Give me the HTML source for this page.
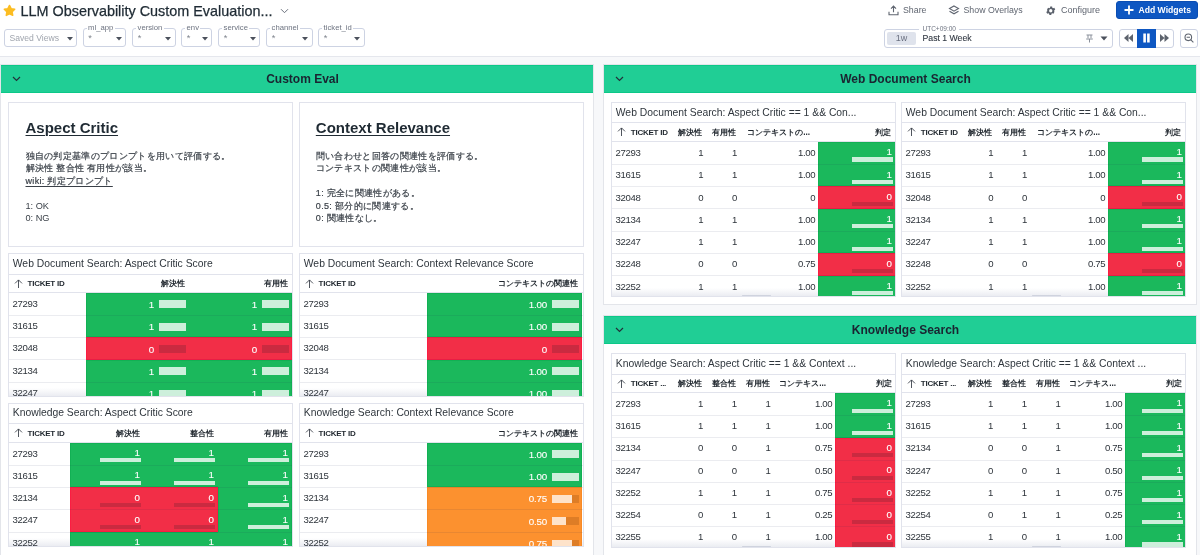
<!DOCTYPE html>
<html><head><meta charset="utf-8"><style>
html,body{margin:0;padding:0;}
body{will-change:transform;width:1200px;height:555px;overflow:hidden;position:relative;background:#f7f8fa;font-family:"Liberation Sans",sans-serif;}
div{box-sizing:content-box;}
</style></head><body>
<div style="position:absolute;left:0px;top:0px;width:1200px;height:56px;background:#fff;"></div>
<div style="position:absolute;left:0px;top:56px;width:1200px;height:1.4px;background:#e5e7ed;"></div>
<svg style="position:absolute;left:2.6px;top:4.1px" width="13" height="13" viewBox="0 0 24 24"><path d="M12.00 2.60 L15.06 8.59 L21.70 9.65 L16.95 14.41 L18.00 21.05 L12.00 18.00 L6.00 21.05 L7.05 14.41 L2.30 9.65 L8.94 8.59Z" fill="#fcbd22" stroke="#fcbd22" stroke-width="2.6" stroke-linejoin="round"/></svg>
<div style="position:absolute;left:20.5px;top:0px;height:22px;line-height:22px;font-size:14.4px;color:#1f2b34;font-weight:400;white-space:nowrap;-webkit-text-stroke:0.25px #1f2b34;">LLM Observability Custom Evaluation...</div>
<svg style="position:absolute;left:280px;top:8px" width="9" height="6" viewBox="0 0 9 6"><path d="M1 1.2l3.5 3.5 3.5-3.5" stroke="#6a707c" stroke-width="1" fill="none"/></svg>
<div style="position:absolute;left:3.5px;top:29.2px;width:73.5px;height:18.2px;box-sizing:border-box;border:1.2px solid #cdd3e3;border-radius:3px;background:#fff;"></div>
<div style="position:absolute;left:9.5px;top:32.3px;height:13px;line-height:13px;font-size:8.6px;color:#a0a5ae;font-weight:400;white-space:nowrap;">Saved Views</div>
<svg style="position:absolute;left:66.5px;top:36.6px" width="6" height="4" viewBox="0 0 6 4"><path d="M0 0h6L3 3.5z" fill="#4b515c"/></svg>
<div style="position:absolute;left:82.5px;top:28.3px;width:43.5px;height:18.4px;box-sizing:border-box;border:1.2px solid #cdd3e3;border-radius:3px;background:#fff;"></div>
<div style="position:absolute;left:86.7px;top:26px;width:28px;height:4px;background:#fff;"></div>
<div style="position:absolute;left:88.1px;top:23px;height:9px;line-height:9px;font-size:7.7px;color:#6d7380;font-weight:400;white-space:nowrap;">ml_app</div>
<div style="position:absolute;left:88.3px;top:31.8px;height:12px;line-height:12px;font-size:9.4px;color:#80868f;font-weight:400;white-space:nowrap;">*</div>
<svg style="position:absolute;left:115.5px;top:36.6px" width="6" height="4" viewBox="0 0 6 4"><path d="M0 0h6L3 3.5z" fill="#4b515c"/></svg>
<div style="position:absolute;left:132px;top:28.3px;width:43.5px;height:18.4px;box-sizing:border-box;border:1.2px solid #cdd3e3;border-radius:3px;background:#fff;"></div>
<div style="position:absolute;left:136.2px;top:26px;width:28px;height:4px;background:#fff;"></div>
<div style="position:absolute;left:137.6px;top:23px;height:9px;line-height:9px;font-size:7.7px;color:#6d7380;font-weight:400;white-space:nowrap;">version</div>
<div style="position:absolute;left:137.8px;top:31.8px;height:12px;line-height:12px;font-size:9.4px;color:#80868f;font-weight:400;white-space:nowrap;">*</div>
<svg style="position:absolute;left:165.0px;top:36.6px" width="6" height="4" viewBox="0 0 6 4"><path d="M0 0h6L3 3.5z" fill="#4b515c"/></svg>
<div style="position:absolute;left:181px;top:28.3px;width:31px;height:18.4px;box-sizing:border-box;border:1.2px solid #cdd3e3;border-radius:3px;background:#fff;"></div>
<div style="position:absolute;left:185.2px;top:26px;width:15px;height:4px;background:#fff;"></div>
<div style="position:absolute;left:186.6px;top:23px;height:9px;line-height:9px;font-size:7.7px;color:#6d7380;font-weight:400;white-space:nowrap;">env</div>
<div style="position:absolute;left:186.8px;top:31.8px;height:12px;line-height:12px;font-size:9.4px;color:#80868f;font-weight:400;white-space:nowrap;">*</div>
<svg style="position:absolute;left:201.5px;top:36.6px" width="6" height="4" viewBox="0 0 6 4"><path d="M0 0h6L3 3.5z" fill="#4b515c"/></svg>
<div style="position:absolute;left:218px;top:28.3px;width:42px;height:18.4px;box-sizing:border-box;border:1.2px solid #cdd3e3;border-radius:3px;background:#fff;"></div>
<div style="position:absolute;left:222.2px;top:26px;width:26.6px;height:4px;background:#fff;"></div>
<div style="position:absolute;left:223.6px;top:23px;height:9px;line-height:9px;font-size:7.7px;color:#6d7380;font-weight:400;white-space:nowrap;">service</div>
<div style="position:absolute;left:223.8px;top:31.8px;height:12px;line-height:12px;font-size:9.4px;color:#80868f;font-weight:400;white-space:nowrap;">*</div>
<svg style="position:absolute;left:249.5px;top:36.6px" width="6" height="4" viewBox="0 0 6 4"><path d="M0 0h6L3 3.5z" fill="#4b515c"/></svg>
<div style="position:absolute;left:266px;top:28.3px;width:46.5px;height:18.4px;box-sizing:border-box;border:1.2px solid #cdd3e3;border-radius:3px;background:#fff;"></div>
<div style="position:absolute;left:270.2px;top:26px;width:30px;height:4px;background:#fff;"></div>
<div style="position:absolute;left:271.6px;top:23px;height:9px;line-height:9px;font-size:7.7px;color:#6d7380;font-weight:400;white-space:nowrap;">channel</div>
<div style="position:absolute;left:271.8px;top:31.8px;height:12px;line-height:12px;font-size:9.4px;color:#80868f;font-weight:400;white-space:nowrap;">*</div>
<svg style="position:absolute;left:302.0px;top:36.6px" width="6" height="4" viewBox="0 0 6 4"><path d="M0 0h6L3 3.5z" fill="#4b515c"/></svg>
<div style="position:absolute;left:318px;top:28.3px;width:46.5px;height:18.4px;box-sizing:border-box;border:1.2px solid #cdd3e3;border-radius:3px;background:#fff;"></div>
<div style="position:absolute;left:322.2px;top:26px;width:31.3px;height:4px;background:#fff;"></div>
<div style="position:absolute;left:323.6px;top:23px;height:9px;line-height:9px;font-size:7.7px;color:#6d7380;font-weight:400;white-space:nowrap;">ticket_id</div>
<div style="position:absolute;left:323.8px;top:31.8px;height:12px;line-height:12px;font-size:9.4px;color:#80868f;font-weight:400;white-space:nowrap;">*</div>
<svg style="position:absolute;left:354.0px;top:36.6px" width="6" height="4" viewBox="0 0 6 4"><path d="M0 0h6L3 3.5z" fill="#4b515c"/></svg>
<svg style="position:absolute;left:888px;top:5px" width="11" height="11" viewBox="0 0 11 11" fill="none" stroke="#5f6570" stroke-width="1.1"><path d="M5.5 1.2v6M3 3.6l2.5-2.5 2.5 2.5M1 6.8v3h9v-3"/></svg>
<div style="position:absolute;left:903px;top:2px;height:16px;line-height:16px;font-size:8.8px;color:#5f6570;font-weight:400;white-space:nowrap;">Share</div>
<svg style="position:absolute;left:948px;top:5px" width="12" height="11" viewBox="0 0 12 11" fill="none" stroke="#5f6570" stroke-width="1.1"><path d="M6 1L10.5 3.6 6 6.2 1.5 3.6z M1.5 6.2L6 8.8 10.5 6.2"/></svg>
<div style="position:absolute;left:963.5px;top:2px;height:16px;line-height:16px;font-size:8.8px;color:#5f6570;font-weight:400;white-space:nowrap;">Show Overlays</div>
<svg style="position:absolute;left:1046px;top:6px" width="9.5" height="9.5" viewBox="2 2 20 20"><path fill="#5a606b" d="M19.4 13a7.7 7.7 0 0 0 0-2l2.1-1.6-2-3.5-2.5 1a7.6 7.6 0 0 0-1.7-1l-.4-2.6h-4l-.4 2.6a7.6 7.6 0 0 0-1.7 1l-2.5-1-2 3.5L4.6 11a7.7 7.7 0 0 0 0 2l-2.1 1.6 2 3.5 2.5-1a7.6 7.6 0 0 0 1.7 1l.4 2.6h4l.4-2.6a7.6 7.6 0 0 0 1.7-1l2.5 1 2-3.5zM12 15.5a3.5 3.5 0 1 1 0-7 3.5 3.5 0 0 1 0 7z"/></svg>
<div style="position:absolute;left:1061px;top:2px;height:16px;line-height:16px;font-size:9px;color:#5f6570;font-weight:400;white-space:nowrap;">Configure</div>
<div style="position:absolute;left:1116px;top:1px;width:82px;height:18px;box-sizing:border-box;background:#0e57c2;border:1px solid #0a4db3;border-radius:3px;"></div>
<svg style="position:absolute;left:1124px;top:5px" width="10" height="10" viewBox="0 0 10 10" stroke="#fff" stroke-width="1.8"><path d="M5 0.5v9M0.5 5h9"/></svg>
<div style="position:absolute;left:1138.5px;top:1px;height:18px;line-height:18px;font-size:8.6px;color:#fff;font-weight:700;white-space:nowrap;">Add Widgets</div>
<div style="position:absolute;left:884px;top:28.5px;width:229px;height:19px;box-sizing:border-box;border:1.2px solid #cdd3e3;border-radius:3px;background:#fff;"></div>
<div style="position:absolute;left:919px;top:26px;width:40px;height:4px;background:#fff;"></div>
<div style="position:absolute;left:922.5px;top:25px;height:8px;line-height:8px;font-size:6.5px;color:#6d7380;font-weight:400;white-space:nowrap;">UTC+09:00</div>
<div style="position:absolute;left:887px;top:32px;width:29px;height:12.5px;background:#dfe3ec;border-radius:2px;"></div>
<div style="position:absolute;left:887px;width:29px;text-align:center;top:32px;height:12.5px;line-height:12.5px;font-size:9px;color:#6a7080;font-weight:400;white-space:nowrap;">1w</div>
<div style="position:absolute;left:922.5px;top:31px;height:14px;line-height:14px;font-size:8.7px;color:#2f3640;font-weight:400;white-space:nowrap;-webkit-text-stroke:0.1px #2f3640;">Past 1 Week</div>
<svg style="position:absolute;left:1085px;top:34px" width="9" height="9" viewBox="0 0 9 9" fill="none" stroke="#8a909b" stroke-width="1"><path d="M1.5 1h6M3 1v3.2M6 1v3.2M1.2 5h6.6M4.5 5v3.5"/></svg>
<svg style="position:absolute;left:1100px;top:36px" width="8" height="5" viewBox="0 0 8 5"><path d="M0.5 0.5h7L4 4.5z" fill="#4b515c"/></svg>
<div style="position:absolute;left:1119px;top:28.5px;width:54.5px;height:19px;box-sizing:border-box;border:1.2px solid #cdd3e3;border-radius:3px;background:#fff;"></div>
<div style="position:absolute;left:1137px;top:28.5px;width:18.8px;height:19px;background:#0e57c2;"></div>
<svg style="position:absolute;left:1124px;top:34px" width="9" height="8" viewBox="0 0 9 8" fill="#5d636d"><path d="M4.5 0v8L0 4zM9 0v8L4.5 4z"/></svg>
<svg style="position:absolute;left:1142px;top:33px" width="9" height="10" viewBox="0 0 9 10" fill="#fff"><rect x="1.3" y="0.5" width="2.6" height="9"/><rect x="5.1" y="0.5" width="2.6" height="9"/></svg>
<svg style="position:absolute;left:1160px;top:34px" width="9" height="8" viewBox="0 0 9 8" fill="#5d636d"><path d="M0 0v8L4.5 4zM4.5 0v8L9 4z"/></svg>
<div style="position:absolute;left:1180px;top:28.5px;width:17.5px;height:19px;box-sizing:border-box;border:1.2px solid #cdd3e3;border-radius:3px;background:#fff;"></div>
<svg style="position:absolute;left:1184px;top:33px" width="10" height="10" viewBox="0 0 10 10" fill="none" stroke="#5f6570" stroke-width="1.1"><circle cx="4.3" cy="4.3" r="3.3"/><path d="M2.6 4.3h3.4M6.8 6.8l2.6 2.6"/></svg>
<div style="position:absolute;left:0px;top:57px;width:1200px;height:498px;background:#f7f8fa;"></div>
<div style="position:absolute;left:0px;top:64px;width:594px;height:500px;box-sizing:border-box;background:#fff;border:1px solid #e3e5ea;"></div>
<div style="position:absolute;left:1px;top:65px;width:592px;height:28px;background:#20ce95;box-shadow:inset 0 -1px 0 #0cc888, inset 0 1px 0 #0cc888;"></div>
<svg style="position:absolute;left:12px;top:76px" width="9" height="6" viewBox="0 0 9 6"><path d="M1 1l3.5 3.5L8 1" stroke="#23313a" stroke-width="1.2" fill="none"/></svg>
<div style="position:absolute;left:2.5px;width:600px;text-align:center;top:65px;height:28px;line-height:28px;font-size:12px;color:#1a2431;font-weight:700;white-space:nowrap;">Custom Eval</div>
<div style="position:absolute;left:603px;top:64px;width:594px;height:241px;box-sizing:border-box;background:#fff;border:1px solid #e3e5ea;"></div>
<div style="position:absolute;left:604px;top:65px;width:592px;height:28px;background:#20ce95;box-shadow:inset 0 -1px 0 #0cc888, inset 0 1px 0 #0cc888;"></div>
<svg style="position:absolute;left:615px;top:76px" width="9" height="6" viewBox="0 0 9 6"><path d="M1 1l3.5 3.5L8 1" stroke="#23313a" stroke-width="1.2" fill="none"/></svg>
<div style="position:absolute;left:605.5px;width:600px;text-align:center;top:65px;height:28px;line-height:28px;font-size:12px;color:#1a2431;font-weight:700;white-space:nowrap;">Web Document Search</div>
<div style="position:absolute;left:603px;top:315px;width:594px;height:260px;box-sizing:border-box;background:#fff;border:1px solid #e3e5ea;"></div>
<div style="position:absolute;left:604px;top:316px;width:592px;height:28px;background:#20ce95;box-shadow:inset 0 -1px 0 #0cc888, inset 0 1px 0 #0cc888;"></div>
<svg style="position:absolute;left:615px;top:327px" width="9" height="6" viewBox="0 0 9 6"><path d="M1 1l3.5 3.5L8 1" stroke="#23313a" stroke-width="1.2" fill="none"/></svg>
<div style="position:absolute;left:605.5px;width:600px;text-align:center;top:316px;height:28px;line-height:28px;font-size:12px;color:#1a2431;font-weight:700;white-space:nowrap;">Knowledge Search</div>
<div style="position:absolute;left:8px;top:102px;width:285px;height:145px;box-sizing:border-box;background:#fff;border:1px solid #e1e3ec;"></div>
<div style="position:absolute;left:25.5px;top:118.2px;height:20px;line-height:20px;font-size:15px;color:#1f2a33;font-weight:700;white-space:nowrap;text-decoration:underline;text-decoration-thickness:1px;text-underline-offset:2px;">Aspect Critic</div>
<div style="position:absolute;left:25.5px;top:149.55px;height:12.5px;line-height:12.5px;font-size:9px;color:#3a4048;font-weight:400;white-space:nowrap;letter-spacing:0.33px;-webkit-text-stroke:0.2px #3a4048;">独自の判定基準のプロンプトを用いて評価する。</div>
<div style="position:absolute;left:25.5px;top:162.10000000000002px;height:12.5px;line-height:12.5px;font-size:9px;color:#3a4048;font-weight:400;white-space:nowrap;letter-spacing:0.33px;-webkit-text-stroke:0.2px #3a4048;">解決性 整合性 有用性が該当。</div>
<div style="position:absolute;left:25.5px;top:174.65px;height:12.5px;line-height:12.5px;font-size:9px;color:#3a4048;font-weight:400;white-space:nowrap;text-decoration:underline;text-decoration-thickness:1px;text-underline-offset:1.5px;letter-spacing:0.33px;-webkit-text-stroke:0.2px #3a4048;">wiki: 判定プロンプト</div>
<div style="position:absolute;left:25.5px;top:199.75px;height:12.5px;line-height:12.5px;font-size:9.2px;color:#3a4048;font-weight:400;white-space:nowrap;">1: OK</div>
<div style="position:absolute;left:25.5px;top:212.3px;height:12.5px;line-height:12.5px;font-size:9.2px;color:#3a4048;font-weight:400;white-space:nowrap;">0: NG</div>
<div style="position:absolute;left:299px;top:102px;width:285px;height:145px;box-sizing:border-box;background:#fff;border:1px solid #e1e3ec;"></div>
<div style="position:absolute;left:315.8px;top:118.2px;height:20px;line-height:20px;font-size:15px;color:#1f2a33;font-weight:700;white-space:nowrap;text-decoration:underline;text-decoration-thickness:1px;text-underline-offset:2px;">Context Relevance</div>
<div style="position:absolute;left:315.8px;top:149.55px;height:12.5px;line-height:12.5px;font-size:9px;color:#3a4048;font-weight:400;white-space:nowrap;letter-spacing:0.33px;-webkit-text-stroke:0.2px #3a4048;">問い合わせと回答の関連性を評価する。</div>
<div style="position:absolute;left:315.8px;top:162.10000000000002px;height:12.5px;line-height:12.5px;font-size:9px;color:#3a4048;font-weight:400;white-space:nowrap;letter-spacing:0.33px;-webkit-text-stroke:0.2px #3a4048;">コンテキストの関連性が該当。</div>
<div style="position:absolute;left:315.8px;top:187.20000000000002px;height:12.5px;line-height:12.5px;font-size:9px;color:#3a4048;font-weight:400;white-space:nowrap;letter-spacing:0.33px;-webkit-text-stroke:0.2px #3a4048;">1: 完全に関連性がある。</div>
<div style="position:absolute;left:315.8px;top:199.75px;height:12.5px;line-height:12.5px;font-size:9px;color:#3a4048;font-weight:400;white-space:nowrap;letter-spacing:0.33px;-webkit-text-stroke:0.2px #3a4048;">0.5: 部分的に関連する。</div>
<div style="position:absolute;left:315.8px;top:212.3px;height:12.5px;line-height:12.5px;font-size:9px;color:#3a4048;font-weight:400;white-space:nowrap;letter-spacing:0.33px;-webkit-text-stroke:0.2px #3a4048;">0: 関連性なし。</div>
<div style="position:absolute;left:8px;top:253px;width:285px;height:144px;background:#fff;overflow:hidden;"><div style="position:absolute;left:4.8px;top:-0.5px;height:21.399999999999977px;line-height:21.399999999999977px;font-size:10.35px;color:#2f363d;font-weight:400;white-space:nowrap;">Web Document Search: Aspect Critic Score</div><div style="position:absolute;left:0px;top:21px;width:285px;height:1px;background:#e1e3ec;"></div><div style="position:absolute;left:0px;top:39px;width:285px;height:1px;background:#e1e3ec;"></div><div style="position:absolute;left:0px;top:135px;width:285px;height:9px;background:linear-gradient(rgba(255,255,255,0),rgba(232,234,240,1));"></div><svg style="position:absolute;left:6px;top:25.49999999999998px" width="9" height="9" viewBox="0 0 9 9" fill="none" stroke="#3d434c" stroke-width="0.9"><path d="M4.5 1v8M1 4.4L4.5 0.9 8 4.4"/></svg><div style="position:absolute;left:19.6px;top:22.399999999999977px;height:18.0px;line-height:18.0px;font-size:8px;color:#1f262d;font-weight:700;white-space:nowrap;letter-spacing:-0.25px;">TICKET ID</div><div style="position:absolute;left:-223.2px;width:400px;text-align:right;top:22.399999999999977px;height:18.0px;line-height:18.0px;font-size:8.2px;color:#1f262d;font-weight:700;white-space:nowrap;">解決性</div><div style="position:absolute;left:-120px;width:400px;text-align:right;top:22.399999999999977px;height:18.0px;line-height:18.0px;font-size:8.2px;color:#1f262d;font-weight:700;white-space:nowrap;">有用性</div><div style="position:absolute;left:4.6px;top:39.59999999999997px;height:22.3px;line-height:22.3px;font-size:9.6px;color:#2d333a;font-weight:400;white-space:nowrap;letter-spacing:-0.33px;">27293</div><div style="position:absolute;left:78px;top:40px;width:103px;height:22px;box-sizing:border-box;background:#1bb85c;border-left:1px solid #12b054;border-top:1px solid #12b054;"></div><div style="position:absolute;left:-254px;width:400px;text-align:right;top:40.89999999999998px;height:22.3px;line-height:22.3px;font-size:9.8px;color:#fff;font-weight:400;white-space:nowrap;letter-spacing:-0.22px;-webkit-text-stroke:0.1px #fff;">1</div><div style="position:absolute;left:151.0px;top:47.39999999999998px;width:27.0px;height:8px;background:rgba(255,255,255,0.78);"></div><div style="position:absolute;left:181px;top:40px;width:103px;height:22px;box-sizing:border-box;background:#1bb85c;border-right:1px solid #12b054;border-top:1px solid #12b054;"></div><div style="position:absolute;left:-151px;width:400px;text-align:right;top:40.89999999999998px;height:22.3px;line-height:22.3px;font-size:9.8px;color:#fff;font-weight:400;white-space:nowrap;letter-spacing:-0.22px;-webkit-text-stroke:0.1px #fff;">1</div><div style="position:absolute;left:254.0px;top:47.39999999999998px;width:27.0px;height:8px;background:rgba(255,255,255,0.78);"></div><div style="position:absolute;left:4.6px;top:61.89999999999997px;height:22.3px;line-height:22.3px;font-size:9.6px;color:#2d333a;font-weight:400;white-space:nowrap;letter-spacing:-0.33px;">31615</div><div style="position:absolute;left:78px;top:62px;width:103px;height:22px;box-sizing:border-box;background:#1bb85c;border-left:1px solid #12b054;border-bottom:1px solid #12b054;"></div><div style="position:absolute;left:-254px;width:400px;text-align:right;top:63.199999999999974px;height:22.3px;line-height:22.3px;font-size:9.8px;color:#fff;font-weight:400;white-space:nowrap;letter-spacing:-0.22px;-webkit-text-stroke:0.1px #fff;">1</div><div style="position:absolute;left:151.0px;top:69.69999999999997px;width:27.0px;height:8px;background:rgba(255,255,255,0.78);"></div><div style="position:absolute;left:181px;top:62px;width:103px;height:22px;box-sizing:border-box;background:#1bb85c;border-right:1px solid #12b054;border-bottom:1px solid #12b054;"></div><div style="position:absolute;left:-151px;width:400px;text-align:right;top:63.199999999999974px;height:22.3px;line-height:22.3px;font-size:9.8px;color:#fff;font-weight:400;white-space:nowrap;letter-spacing:-0.22px;-webkit-text-stroke:0.1px #fff;">1</div><div style="position:absolute;left:254.0px;top:69.69999999999997px;width:27.0px;height:8px;background:rgba(255,255,255,0.78);"></div><div style="position:absolute;left:4.6px;top:84.19999999999997px;height:22.3px;line-height:22.3px;font-size:9.6px;color:#2d333a;font-weight:400;white-space:nowrap;letter-spacing:-0.33px;">32048</div><div style="position:absolute;left:78px;top:84px;width:103px;height:23px;box-sizing:border-box;background:#f22e47;border-left:1px solid #fb1d42;border-top:1px solid #fb1d42;border-bottom:1px solid #fb1d42;"></div><div style="position:absolute;left:-254px;width:400px;text-align:right;top:85.49999999999997px;height:22.3px;line-height:22.3px;font-size:9.8px;color:#fff;font-weight:400;white-space:nowrap;letter-spacing:-0.22px;-webkit-text-stroke:0.1px #fff;">0</div><div style="position:absolute;left:151.0px;top:91.99999999999997px;width:27.0px;height:8px;background:rgba(60,30,40,0.22);"></div><div style="position:absolute;left:181px;top:84px;width:103px;height:23px;box-sizing:border-box;background:#f22e47;border-right:1px solid #fb1d42;border-top:1px solid #fb1d42;border-bottom:1px solid #fb1d42;"></div><div style="position:absolute;left:-151px;width:400px;text-align:right;top:85.49999999999997px;height:22.3px;line-height:22.3px;font-size:9.8px;color:#fff;font-weight:400;white-space:nowrap;letter-spacing:-0.22px;-webkit-text-stroke:0.1px #fff;">0</div><div style="position:absolute;left:254.0px;top:91.99999999999997px;width:27.0px;height:8px;background:rgba(60,30,40,0.22);"></div><div style="position:absolute;left:4.6px;top:106.49999999999999px;height:22.3px;line-height:22.3px;font-size:9.6px;color:#2d333a;font-weight:400;white-space:nowrap;letter-spacing:-0.33px;">32134</div><div style="position:absolute;left:78px;top:107px;width:103px;height:22px;box-sizing:border-box;background:#1bb85c;border-left:1px solid #12b054;border-top:1px solid #12b054;"></div><div style="position:absolute;left:-254px;width:400px;text-align:right;top:107.79999999999998px;height:22.3px;line-height:22.3px;font-size:9.8px;color:#fff;font-weight:400;white-space:nowrap;letter-spacing:-0.22px;-webkit-text-stroke:0.1px #fff;">1</div><div style="position:absolute;left:151.0px;top:114.29999999999998px;width:27.0px;height:8px;background:rgba(255,255,255,0.78);"></div><div style="position:absolute;left:181px;top:107px;width:103px;height:22px;box-sizing:border-box;background:#1bb85c;border-right:1px solid #12b054;border-top:1px solid #12b054;"></div><div style="position:absolute;left:-151px;width:400px;text-align:right;top:107.79999999999998px;height:22.3px;line-height:22.3px;font-size:9.8px;color:#fff;font-weight:400;white-space:nowrap;letter-spacing:-0.22px;-webkit-text-stroke:0.1px #fff;">1</div><div style="position:absolute;left:254.0px;top:114.29999999999998px;width:27.0px;height:8px;background:rgba(255,255,255,0.78);"></div><div style="position:absolute;left:4.6px;top:128.79999999999998px;height:22.3px;line-height:22.3px;font-size:9.6px;color:#2d333a;font-weight:400;white-space:nowrap;letter-spacing:-0.33px;">32247</div><div style="position:absolute;left:78px;top:129px;width:103px;height:22px;box-sizing:border-box;background:#1bb85c;border-left:1px solid #12b054;"></div><div style="position:absolute;left:-254px;width:400px;text-align:right;top:130.09999999999997px;height:22.3px;line-height:22.3px;font-size:9.8px;color:#fff;font-weight:400;white-space:nowrap;letter-spacing:-0.22px;-webkit-text-stroke:0.1px #fff;">1</div><div style="position:absolute;left:151.0px;top:136.59999999999997px;width:27.0px;height:8px;background:rgba(255,255,255,0.78);"></div><div style="position:absolute;left:181px;top:129px;width:103px;height:22px;box-sizing:border-box;background:#1bb85c;border-right:1px solid #12b054;"></div><div style="position:absolute;left:-151px;width:400px;text-align:right;top:130.09999999999997px;height:22.3px;line-height:22.3px;font-size:9.8px;color:#fff;font-weight:400;white-space:nowrap;letter-spacing:-0.22px;-webkit-text-stroke:0.1px #fff;">1</div><div style="position:absolute;left:254.0px;top:136.59999999999997px;width:27.0px;height:8px;background:rgba(255,255,255,0.78);"></div><div style="position:absolute;left:0px;top:61.699999999999974px;width:285px;height:1px;background:rgba(30,40,90,0.09);"></div><div style="position:absolute;left:0px;top:83.99999999999997px;width:285px;height:1px;background:rgba(30,40,90,0.09);"></div><div style="position:absolute;left:0px;top:106.29999999999997px;width:285px;height:1px;background:rgba(30,40,90,0.09);"></div><div style="position:absolute;left:0px;top:128.6px;width:285px;height:1px;background:rgba(30,40,90,0.09);"></div><div style="position:absolute;left:0px;top:150.89999999999998px;width:285px;height:1px;background:rgba(30,40,90,0.09);"></div><div style="position:absolute;left:0px;top:0px;width:285px;height:144px;box-sizing:border-box;border:1px solid #e1e3ec;"></div></div>
<div style="position:absolute;left:299px;top:253px;width:285px;height:144px;background:#fff;overflow:hidden;"><div style="position:absolute;left:4.8px;top:-0.5px;height:21.399999999999977px;line-height:21.399999999999977px;font-size:10.35px;color:#2f363d;font-weight:400;white-space:nowrap;">Web Document Search: Context Relevance Score</div><div style="position:absolute;left:0px;top:21px;width:285px;height:1px;background:#e1e3ec;"></div><div style="position:absolute;left:0px;top:39px;width:285px;height:1px;background:#e1e3ec;"></div><div style="position:absolute;left:0px;top:135px;width:285px;height:9px;background:linear-gradient(rgba(255,255,255,0),rgba(232,234,240,1));"></div><svg style="position:absolute;left:6px;top:25.49999999999998px" width="9" height="9" viewBox="0 0 9 9" fill="none" stroke="#3d434c" stroke-width="0.9"><path d="M4.5 1v8M1 4.4L4.5 0.9 8 4.4"/></svg><div style="position:absolute;left:19.600000000000023px;top:22.399999999999977px;height:18.0px;line-height:18.0px;font-size:8px;color:#1f262d;font-weight:700;white-space:nowrap;letter-spacing:-0.25px;">TICKET ID</div><div style="position:absolute;left:-120.79999999999995px;width:400px;text-align:right;top:22.399999999999977px;height:18.0px;line-height:18.0px;font-size:8.2px;color:#1f262d;font-weight:700;white-space:nowrap;">コンテキストの関連性</div><div style="position:absolute;left:4.600000000000023px;top:39.59999999999997px;height:22.3px;line-height:22.3px;font-size:9.6px;color:#2d333a;font-weight:400;white-space:nowrap;letter-spacing:-0.33px;">27293</div><div style="position:absolute;left:128px;top:40px;width:155px;height:22px;box-sizing:border-box;background:#1bb85c;border-left:1px solid #12b054;border-right:1px solid #12b054;border-top:1px solid #12b054;"></div><div style="position:absolute;left:-152px;width:400px;text-align:right;top:40.89999999999998px;height:22.3px;line-height:22.3px;font-size:9.8px;color:#fff;font-weight:400;white-space:nowrap;letter-spacing:-0.22px;-webkit-text-stroke:0.1px #fff;">1.00</div><div style="position:absolute;left:253.0px;top:47.39999999999998px;width:27.0px;height:8px;background:rgba(255,255,255,0.78);"></div><div style="position:absolute;left:4.600000000000023px;top:61.89999999999997px;height:22.3px;line-height:22.3px;font-size:9.6px;color:#2d333a;font-weight:400;white-space:nowrap;letter-spacing:-0.33px;">31615</div><div style="position:absolute;left:128px;top:62px;width:155px;height:22px;box-sizing:border-box;background:#1bb85c;border-left:1px solid #12b054;border-right:1px solid #12b054;border-bottom:1px solid #12b054;"></div><div style="position:absolute;left:-152px;width:400px;text-align:right;top:63.199999999999974px;height:22.3px;line-height:22.3px;font-size:9.8px;color:#fff;font-weight:400;white-space:nowrap;letter-spacing:-0.22px;-webkit-text-stroke:0.1px #fff;">1.00</div><div style="position:absolute;left:253.0px;top:69.69999999999997px;width:27.0px;height:8px;background:rgba(255,255,255,0.78);"></div><div style="position:absolute;left:4.600000000000023px;top:84.19999999999997px;height:22.3px;line-height:22.3px;font-size:9.6px;color:#2d333a;font-weight:400;white-space:nowrap;letter-spacing:-0.33px;">32048</div><div style="position:absolute;left:128px;top:84px;width:155px;height:23px;box-sizing:border-box;background:#f22e47;border-left:1px solid #fb1d42;border-right:1px solid #fb1d42;border-top:1px solid #fb1d42;border-bottom:1px solid #fb1d42;"></div><div style="position:absolute;left:-152px;width:400px;text-align:right;top:85.49999999999997px;height:22.3px;line-height:22.3px;font-size:9.8px;color:#fff;font-weight:400;white-space:nowrap;letter-spacing:-0.22px;-webkit-text-stroke:0.1px #fff;">0</div><div style="position:absolute;left:253.0px;top:91.99999999999997px;width:27.0px;height:8px;background:rgba(60,30,40,0.22);"></div><div style="position:absolute;left:4.600000000000023px;top:106.49999999999999px;height:22.3px;line-height:22.3px;font-size:9.6px;color:#2d333a;font-weight:400;white-space:nowrap;letter-spacing:-0.33px;">32134</div><div style="position:absolute;left:128px;top:107px;width:155px;height:22px;box-sizing:border-box;background:#1bb85c;border-left:1px solid #12b054;border-right:1px solid #12b054;border-top:1px solid #12b054;"></div><div style="position:absolute;left:-152px;width:400px;text-align:right;top:107.79999999999998px;height:22.3px;line-height:22.3px;font-size:9.8px;color:#fff;font-weight:400;white-space:nowrap;letter-spacing:-0.22px;-webkit-text-stroke:0.1px #fff;">1.00</div><div style="position:absolute;left:253.0px;top:114.29999999999998px;width:27.0px;height:8px;background:rgba(255,255,255,0.78);"></div><div style="position:absolute;left:4.600000000000023px;top:128.79999999999998px;height:22.3px;line-height:22.3px;font-size:9.6px;color:#2d333a;font-weight:400;white-space:nowrap;letter-spacing:-0.33px;">32247</div><div style="position:absolute;left:128px;top:129px;width:155px;height:22px;box-sizing:border-box;background:#1bb85c;border-left:1px solid #12b054;border-right:1px solid #12b054;"></div><div style="position:absolute;left:-152px;width:400px;text-align:right;top:130.09999999999997px;height:22.3px;line-height:22.3px;font-size:9.8px;color:#fff;font-weight:400;white-space:nowrap;letter-spacing:-0.22px;-webkit-text-stroke:0.1px #fff;">1.00</div><div style="position:absolute;left:253.0px;top:136.59999999999997px;width:27.0px;height:8px;background:rgba(255,255,255,0.78);"></div><div style="position:absolute;left:0px;top:61.699999999999974px;width:285px;height:1px;background:rgba(30,40,90,0.09);"></div><div style="position:absolute;left:0px;top:83.99999999999997px;width:285px;height:1px;background:rgba(30,40,90,0.09);"></div><div style="position:absolute;left:0px;top:106.29999999999997px;width:285px;height:1px;background:rgba(30,40,90,0.09);"></div><div style="position:absolute;left:0px;top:128.6px;width:285px;height:1px;background:rgba(30,40,90,0.09);"></div><div style="position:absolute;left:0px;top:150.89999999999998px;width:285px;height:1px;background:rgba(30,40,90,0.09);"></div><div style="position:absolute;left:0px;top:0px;width:285px;height:144px;box-sizing:border-box;border:1px solid #e1e3ec;"></div></div>
<div style="position:absolute;left:8px;top:403px;width:285px;height:144px;background:#fff;overflow:hidden;"><div style="position:absolute;left:4.8px;top:-0.5px;height:20.600000000000023px;line-height:20.600000000000023px;font-size:10.35px;color:#2f363d;font-weight:400;white-space:nowrap;">Knowledge Search: Aspect Critic Score</div><div style="position:absolute;left:0px;top:20px;width:285px;height:1px;background:#e1e3ec;"></div><div style="position:absolute;left:0px;top:39px;width:285px;height:1px;background:#e1e3ec;"></div><div style="position:absolute;left:0px;top:135px;width:285px;height:9px;background:linear-gradient(rgba(255,255,255,0),rgba(232,234,240,1));"></div><svg style="position:absolute;left:6px;top:25.05000000000002px" width="9" height="9" viewBox="0 0 9 9" fill="none" stroke="#3d434c" stroke-width="0.9"><path d="M4.5 1v8M1 4.4L4.5 0.9 8 4.4"/></svg><div style="position:absolute;left:19.6px;top:21.600000000000023px;height:18.69999999999999px;line-height:18.69999999999999px;font-size:8px;color:#1f262d;font-weight:700;white-space:nowrap;letter-spacing:-0.25px;">TICKET ID</div><div style="position:absolute;left:-268.5px;width:400px;text-align:right;top:21.600000000000023px;height:18.69999999999999px;line-height:18.69999999999999px;font-size:8.2px;color:#1f262d;font-weight:700;white-space:nowrap;">解決性</div><div style="position:absolute;left:-194.2px;width:400px;text-align:right;top:21.600000000000023px;height:18.69999999999999px;line-height:18.69999999999999px;font-size:8.2px;color:#1f262d;font-weight:700;white-space:nowrap;">整合性</div><div style="position:absolute;left:-120px;width:400px;text-align:right;top:21.600000000000023px;height:18.69999999999999px;line-height:18.69999999999999px;font-size:8.2px;color:#1f262d;font-weight:700;white-space:nowrap;">有用性</div><div style="position:absolute;left:4.6px;top:39.50000000000001px;height:22.3px;line-height:22.3px;font-size:9.6px;color:#2d333a;font-weight:400;white-space:nowrap;letter-spacing:-0.33px;">27293</div><div style="position:absolute;left:62px;top:40px;width:74px;height:22px;box-sizing:border-box;background:#1bb85c;border-left:1px solid #12b054;border-top:1px solid #12b054;"></div><div style="position:absolute;left:-268.3px;width:400px;text-align:right;top:44.10000000000001px;height:12px;line-height:12px;font-size:9.8px;color:#fff;font-weight:400;white-space:nowrap;letter-spacing:-0.22px;-webkit-text-stroke:0.1px #fff;">1</div><div style="position:absolute;left:92.1px;top:55.30000000000001px;width:40.5px;height:4.2px;background:rgba(255,255,255,0.78);"></div><div style="position:absolute;left:136px;top:40px;width:74px;height:22px;box-sizing:border-box;background:#1bb85c;border-top:1px solid #12b054;"></div><div style="position:absolute;left:-194.3px;width:400px;text-align:right;top:44.10000000000001px;height:12px;line-height:12px;font-size:9.8px;color:#fff;font-weight:400;white-space:nowrap;letter-spacing:-0.22px;-webkit-text-stroke:0.1px #fff;">1</div><div style="position:absolute;left:166.1px;top:55.30000000000001px;width:40.5px;height:4.2px;background:rgba(255,255,255,0.78);"></div><div style="position:absolute;left:210px;top:40px;width:74px;height:22px;box-sizing:border-box;background:#1bb85c;border-right:1px solid #12b054;border-top:1px solid #12b054;"></div><div style="position:absolute;left:-120.30000000000001px;width:400px;text-align:right;top:44.10000000000001px;height:12px;line-height:12px;font-size:9.8px;color:#fff;font-weight:400;white-space:nowrap;letter-spacing:-0.22px;-webkit-text-stroke:0.1px #fff;">1</div><div style="position:absolute;left:240.10000000000002px;top:55.30000000000001px;width:40.5px;height:4.2px;background:rgba(255,255,255,0.78);"></div><div style="position:absolute;left:4.6px;top:61.800000000000004px;height:22.3px;line-height:22.3px;font-size:9.6px;color:#2d333a;font-weight:400;white-space:nowrap;letter-spacing:-0.33px;">31615</div><div style="position:absolute;left:62px;top:62px;width:74px;height:22px;box-sizing:border-box;background:#1bb85c;border-left:1px solid #12b054;border-bottom:1px solid #12b054;"></div><div style="position:absolute;left:-268.3px;width:400px;text-align:right;top:66.4px;height:12px;line-height:12px;font-size:9.8px;color:#fff;font-weight:400;white-space:nowrap;letter-spacing:-0.22px;-webkit-text-stroke:0.1px #fff;">1</div><div style="position:absolute;left:92.1px;top:77.60000000000001px;width:40.5px;height:4.2px;background:rgba(255,255,255,0.78);"></div><div style="position:absolute;left:136px;top:62px;width:74px;height:22px;box-sizing:border-box;background:#1bb85c;border-bottom:1px solid #12b054;"></div><div style="position:absolute;left:-194.3px;width:400px;text-align:right;top:66.4px;height:12px;line-height:12px;font-size:9.8px;color:#fff;font-weight:400;white-space:nowrap;letter-spacing:-0.22px;-webkit-text-stroke:0.1px #fff;">1</div><div style="position:absolute;left:166.1px;top:77.60000000000001px;width:40.5px;height:4.2px;background:rgba(255,255,255,0.78);"></div><div style="position:absolute;left:210px;top:62px;width:74px;height:22px;box-sizing:border-box;background:#1bb85c;border-right:1px solid #12b054;"></div><div style="position:absolute;left:-120.30000000000001px;width:400px;text-align:right;top:66.4px;height:12px;line-height:12px;font-size:9.8px;color:#fff;font-weight:400;white-space:nowrap;letter-spacing:-0.22px;-webkit-text-stroke:0.1px #fff;">1</div><div style="position:absolute;left:240.10000000000002px;top:77.60000000000001px;width:40.5px;height:4.2px;background:rgba(255,255,255,0.78);"></div><div style="position:absolute;left:4.6px;top:84.10000000000001px;height:22.3px;line-height:22.3px;font-size:9.6px;color:#2d333a;font-weight:400;white-space:nowrap;letter-spacing:-0.33px;">32134</div><div style="position:absolute;left:62px;top:84px;width:74px;height:23px;box-sizing:border-box;background:#f22e47;border-left:1px solid #fb1d42;border-top:1px solid #fb1d42;"></div><div style="position:absolute;left:-268.3px;width:400px;text-align:right;top:88.7px;height:12px;line-height:12px;font-size:9.8px;color:#fff;font-weight:400;white-space:nowrap;letter-spacing:-0.22px;-webkit-text-stroke:0.1px #fff;">0</div><div style="position:absolute;left:92.1px;top:99.9px;width:40.5px;height:4.2px;background:rgba(60,30,40,0.22);"></div><div style="position:absolute;left:136px;top:84px;width:74px;height:23px;box-sizing:border-box;background:#f22e47;border-right:1px solid #fb1d42;border-top:1px solid #fb1d42;"></div><div style="position:absolute;left:-194.3px;width:400px;text-align:right;top:88.7px;height:12px;line-height:12px;font-size:9.8px;color:#fff;font-weight:400;white-space:nowrap;letter-spacing:-0.22px;-webkit-text-stroke:0.1px #fff;">0</div><div style="position:absolute;left:166.1px;top:99.9px;width:40.5px;height:4.2px;background:rgba(60,30,40,0.22);"></div><div style="position:absolute;left:210px;top:84px;width:74px;height:23px;box-sizing:border-box;background:#1bb85c;border-left:1px solid #12b054;border-right:1px solid #12b054;"></div><div style="position:absolute;left:-120.30000000000001px;width:400px;text-align:right;top:88.7px;height:12px;line-height:12px;font-size:9.8px;color:#fff;font-weight:400;white-space:nowrap;letter-spacing:-0.22px;-webkit-text-stroke:0.1px #fff;">1</div><div style="position:absolute;left:240.10000000000002px;top:99.9px;width:40.5px;height:4.2px;background:rgba(255,255,255,0.78);"></div><div style="position:absolute;left:4.6px;top:106.40000000000002px;height:22.3px;line-height:22.3px;font-size:9.6px;color:#2d333a;font-weight:400;white-space:nowrap;letter-spacing:-0.33px;">32247</div><div style="position:absolute;left:62px;top:107px;width:74px;height:22px;box-sizing:border-box;background:#f22e47;border-left:1px solid #fb1d42;border-bottom:1px solid #fb1d42;"></div><div style="position:absolute;left:-268.3px;width:400px;text-align:right;top:111.00000000000001px;height:12px;line-height:12px;font-size:9.8px;color:#fff;font-weight:400;white-space:nowrap;letter-spacing:-0.22px;-webkit-text-stroke:0.1px #fff;">0</div><div style="position:absolute;left:92.1px;top:122.20000000000002px;width:40.5px;height:4.2px;background:rgba(60,30,40,0.22);"></div><div style="position:absolute;left:136px;top:107px;width:74px;height:22px;box-sizing:border-box;background:#f22e47;border-right:1px solid #fb1d42;border-bottom:1px solid #fb1d42;"></div><div style="position:absolute;left:-194.3px;width:400px;text-align:right;top:111.00000000000001px;height:12px;line-height:12px;font-size:9.8px;color:#fff;font-weight:400;white-space:nowrap;letter-spacing:-0.22px;-webkit-text-stroke:0.1px #fff;">0</div><div style="position:absolute;left:166.1px;top:122.20000000000002px;width:40.5px;height:4.2px;background:rgba(60,30,40,0.22);"></div><div style="position:absolute;left:210px;top:107px;width:74px;height:22px;box-sizing:border-box;background:#1bb85c;border-left:1px solid #12b054;border-right:1px solid #12b054;"></div><div style="position:absolute;left:-120.30000000000001px;width:400px;text-align:right;top:111.00000000000001px;height:12px;line-height:12px;font-size:9.8px;color:#fff;font-weight:400;white-space:nowrap;letter-spacing:-0.22px;-webkit-text-stroke:0.1px #fff;">1</div><div style="position:absolute;left:240.10000000000002px;top:122.20000000000002px;width:40.5px;height:4.2px;background:rgba(255,255,255,0.78);"></div><div style="position:absolute;left:4.6px;top:128.70000000000002px;height:22.3px;line-height:22.3px;font-size:9.6px;color:#2d333a;font-weight:400;white-space:nowrap;letter-spacing:-0.33px;">32252</div><div style="position:absolute;left:62px;top:129px;width:74px;height:22px;box-sizing:border-box;background:#1bb85c;border-left:1px solid #12b054;border-top:1px solid #12b054;"></div><div style="position:absolute;left:-268.3px;width:400px;text-align:right;top:133.3px;height:12px;line-height:12px;font-size:9.8px;color:#fff;font-weight:400;white-space:nowrap;letter-spacing:-0.22px;-webkit-text-stroke:0.1px #fff;">1</div><div style="position:absolute;left:92.1px;top:144.5px;width:40.5px;height:4.2px;background:rgba(255,255,255,0.78);"></div><div style="position:absolute;left:136px;top:129px;width:74px;height:22px;box-sizing:border-box;background:#1bb85c;border-top:1px solid #12b054;"></div><div style="position:absolute;left:-194.3px;width:400px;text-align:right;top:133.3px;height:12px;line-height:12px;font-size:9.8px;color:#fff;font-weight:400;white-space:nowrap;letter-spacing:-0.22px;-webkit-text-stroke:0.1px #fff;">1</div><div style="position:absolute;left:166.1px;top:144.5px;width:40.5px;height:4.2px;background:rgba(255,255,255,0.78);"></div><div style="position:absolute;left:210px;top:129px;width:74px;height:22px;box-sizing:border-box;background:#1bb85c;border-right:1px solid #12b054;"></div><div style="position:absolute;left:-120.30000000000001px;width:400px;text-align:right;top:133.3px;height:12px;line-height:12px;font-size:9.8px;color:#fff;font-weight:400;white-space:nowrap;letter-spacing:-0.22px;-webkit-text-stroke:0.1px #fff;">1</div><div style="position:absolute;left:240.10000000000002px;top:144.5px;width:40.5px;height:4.2px;background:rgba(255,255,255,0.78);"></div><div style="position:absolute;left:0px;top:61.60000000000001px;width:285px;height:1px;background:rgba(30,40,90,0.09);"></div><div style="position:absolute;left:0px;top:83.9px;width:285px;height:1px;background:rgba(30,40,90,0.09);"></div><div style="position:absolute;left:0px;top:106.2px;width:285px;height:1px;background:rgba(30,40,90,0.09);"></div><div style="position:absolute;left:0px;top:128.50000000000003px;width:285px;height:1px;background:rgba(30,40,90,0.09);"></div><div style="position:absolute;left:0px;top:150.8px;width:285px;height:1px;background:rgba(30,40,90,0.09);"></div><div style="position:absolute;left:0px;top:0px;width:285px;height:144px;box-sizing:border-box;border:1px solid #e1e3ec;"></div></div>
<div style="position:absolute;left:299px;top:403px;width:285px;height:144px;background:#fff;overflow:hidden;"><div style="position:absolute;left:4.8px;top:-0.5px;height:20.600000000000023px;line-height:20.600000000000023px;font-size:10.35px;color:#2f363d;font-weight:400;white-space:nowrap;">Knowledge Search: Context Relevance Score</div><div style="position:absolute;left:0px;top:20px;width:285px;height:1px;background:#e1e3ec;"></div><div style="position:absolute;left:0px;top:39px;width:285px;height:1px;background:#e1e3ec;"></div><div style="position:absolute;left:0px;top:135px;width:285px;height:9px;background:linear-gradient(rgba(255,255,255,0),rgba(232,234,240,1));"></div><svg style="position:absolute;left:6px;top:25.05000000000002px" width="9" height="9" viewBox="0 0 9 9" fill="none" stroke="#3d434c" stroke-width="0.9"><path d="M4.5 1v8M1 4.4L4.5 0.9 8 4.4"/></svg><div style="position:absolute;left:19.600000000000023px;top:21.600000000000023px;height:18.69999999999999px;line-height:18.69999999999999px;font-size:8px;color:#1f262d;font-weight:700;white-space:nowrap;letter-spacing:-0.25px;">TICKET ID</div><div style="position:absolute;left:-120.79999999999995px;width:400px;text-align:right;top:21.600000000000023px;height:18.69999999999999px;line-height:18.69999999999999px;font-size:8.2px;color:#1f262d;font-weight:700;white-space:nowrap;">コンテキストの関連性</div><div style="position:absolute;left:4.600000000000023px;top:39.50000000000001px;height:22.3px;line-height:22.3px;font-size:9.6px;color:#2d333a;font-weight:400;white-space:nowrap;letter-spacing:-0.33px;">27293</div><div style="position:absolute;left:128px;top:40px;width:155px;height:22px;box-sizing:border-box;background:#1bb85c;border-left:1px solid #12b054;border-right:1px solid #12b054;border-top:1px solid #12b054;"></div><div style="position:absolute;left:-152px;width:400px;text-align:right;top:40.80000000000001px;height:22.3px;line-height:22.3px;font-size:9.8px;color:#fff;font-weight:400;white-space:nowrap;letter-spacing:-0.22px;-webkit-text-stroke:0.1px #fff;">1.00</div><div style="position:absolute;left:253.0px;top:47.30000000000001px;width:27.0px;height:8px;background:rgba(255,255,255,0.78);"></div><div style="position:absolute;left:4.600000000000023px;top:61.800000000000004px;height:22.3px;line-height:22.3px;font-size:9.6px;color:#2d333a;font-weight:400;white-space:nowrap;letter-spacing:-0.33px;">31615</div><div style="position:absolute;left:128px;top:62px;width:155px;height:22px;box-sizing:border-box;background:#1bb85c;border-left:1px solid #12b054;border-right:1px solid #12b054;border-bottom:1px solid #12b054;"></div><div style="position:absolute;left:-152px;width:400px;text-align:right;top:63.10000000000001px;height:22.3px;line-height:22.3px;font-size:9.8px;color:#fff;font-weight:400;white-space:nowrap;letter-spacing:-0.22px;-webkit-text-stroke:0.1px #fff;">1.00</div><div style="position:absolute;left:253.0px;top:69.60000000000001px;width:27.0px;height:8px;background:rgba(255,255,255,0.78);"></div><div style="position:absolute;left:4.600000000000023px;top:84.10000000000001px;height:22.3px;line-height:22.3px;font-size:9.6px;color:#2d333a;font-weight:400;white-space:nowrap;letter-spacing:-0.33px;">32134</div><div style="position:absolute;left:128px;top:84px;width:155px;height:23px;box-sizing:border-box;background:#fc912f;border-left:1px solid #f88a25;border-right:1px solid #f88a25;border-top:1px solid #f88a25;"></div><div style="position:absolute;left:-152px;width:400px;text-align:right;top:85.4px;height:22.3px;line-height:22.3px;font-size:9.8px;color:#fff;font-weight:400;white-space:nowrap;letter-spacing:-0.22px;-webkit-text-stroke:0.1px #fff;">0.75</div><div style="position:absolute;left:253.0px;top:91.9px;width:20.25px;height:8px;background:rgba(255,255,255,0.75);"></div><div style="position:absolute;left:273.25px;top:91.9px;width:6.75px;height:8px;background:rgba(90,40,0,0.18);"></div><div style="position:absolute;left:4.600000000000023px;top:106.40000000000002px;height:22.3px;line-height:22.3px;font-size:9.6px;color:#2d333a;font-weight:400;white-space:nowrap;letter-spacing:-0.33px;">32247</div><div style="position:absolute;left:128px;top:107px;width:155px;height:22px;box-sizing:border-box;background:#fc912f;border-left:1px solid #f88a25;border-right:1px solid #f88a25;"></div><div style="position:absolute;left:-152px;width:400px;text-align:right;top:107.70000000000002px;height:22.3px;line-height:22.3px;font-size:9.8px;color:#fff;font-weight:400;white-space:nowrap;letter-spacing:-0.22px;-webkit-text-stroke:0.1px #fff;">0.50</div><div style="position:absolute;left:253.0px;top:114.20000000000002px;width:13.5px;height:8px;background:rgba(255,255,255,0.75);"></div><div style="position:absolute;left:266.5px;top:114.20000000000002px;width:13.5px;height:8px;background:rgba(90,40,0,0.18);"></div><div style="position:absolute;left:4.600000000000023px;top:128.70000000000002px;height:22.3px;line-height:22.3px;font-size:9.6px;color:#2d333a;font-weight:400;white-space:nowrap;letter-spacing:-0.33px;">32252</div><div style="position:absolute;left:128px;top:129px;width:155px;height:22px;box-sizing:border-box;background:#fc912f;border-left:1px solid #f88a25;border-right:1px solid #f88a25;"></div><div style="position:absolute;left:-152px;width:400px;text-align:right;top:130.0px;height:22.3px;line-height:22.3px;font-size:9.8px;color:#fff;font-weight:400;white-space:nowrap;letter-spacing:-0.22px;-webkit-text-stroke:0.1px #fff;">0.75</div><div style="position:absolute;left:253.0px;top:136.5px;width:20.25px;height:8px;background:rgba(255,255,255,0.75);"></div><div style="position:absolute;left:273.25px;top:136.5px;width:6.75px;height:8px;background:rgba(90,40,0,0.18);"></div><div style="position:absolute;left:0px;top:61.60000000000001px;width:285px;height:1px;background:rgba(30,40,90,0.09);"></div><div style="position:absolute;left:0px;top:83.9px;width:285px;height:1px;background:rgba(30,40,90,0.09);"></div><div style="position:absolute;left:0px;top:106.2px;width:285px;height:1px;background:rgba(30,40,90,0.09);"></div><div style="position:absolute;left:0px;top:128.50000000000003px;width:285px;height:1px;background:rgba(30,40,90,0.09);"></div><div style="position:absolute;left:0px;top:150.8px;width:285px;height:1px;background:rgba(30,40,90,0.09);"></div><div style="position:absolute;left:0px;top:0px;width:285px;height:144px;box-sizing:border-box;border:1px solid #e1e3ec;"></div></div>
<div style="position:absolute;left:611px;top:102px;width:285px;height:195px;background:#fff;overflow:hidden;"><div style="position:absolute;left:4.8px;top:-0.5px;height:21px;line-height:21px;font-size:10.35px;color:#2f363d;font-weight:400;white-space:nowrap;">Web Document Search: Aspect Critic == 1 &amp;&amp; Con...</div><div style="position:absolute;left:0px;top:20px;width:285px;height:1px;background:#e1e3ec;"></div><div style="position:absolute;left:0px;top:39px;width:285px;height:1px;background:#e1e3ec;"></div><div style="position:absolute;left:0px;top:186px;width:285px;height:9px;background:linear-gradient(rgba(255,255,255,0),rgba(232,234,240,1));"></div><svg style="position:absolute;left:6px;top:25.300000000000004px" width="9" height="9" viewBox="0 0 9 9" fill="none" stroke="#3d434c" stroke-width="0.9"><path d="M4.5 1v8M1 4.4L4.5 0.9 8 4.4"/></svg><div style="position:absolute;left:19.799999999999955px;top:22.0px;height:18.400000000000006px;line-height:18.400000000000006px;font-size:8px;color:#1f262d;font-weight:700;white-space:nowrap;letter-spacing:-0.25px;">TICKET ID</div><div style="position:absolute;left:-308.70000000000005px;width:400px;text-align:right;top:22.0px;height:18.400000000000006px;line-height:18.400000000000006px;font-size:8.2px;color:#1f262d;font-weight:700;white-space:nowrap;">解決性</div><div style="position:absolute;left:-275px;width:400px;text-align:right;top:22.0px;height:18.400000000000006px;line-height:18.400000000000006px;font-size:8.2px;color:#1f262d;font-weight:700;white-space:nowrap;">有用性</div><div style="position:absolute;left:-201px;width:400px;text-align:right;top:22.0px;height:18.400000000000006px;line-height:18.400000000000006px;font-size:8.2px;color:#1f262d;font-weight:700;white-space:nowrap;">コンテキストの...</div><div style="position:absolute;left:-120px;width:400px;text-align:right;top:22.0px;height:18.400000000000006px;line-height:18.400000000000006px;font-size:8.2px;color:#1f262d;font-weight:700;white-space:nowrap;">判定</div><div style="position:absolute;left:4.600000000000023px;top:39.900000000000006px;height:22.3px;line-height:22.3px;font-size:9.6px;color:#2d333a;font-weight:400;white-space:nowrap;letter-spacing:-0.33px;">27293</div><div style="position:absolute;left:-307.7px;width:400px;text-align:right;top:39.900000000000006px;height:22.3px;line-height:22.3px;font-size:9.6px;color:#2d333a;font-weight:400;white-space:nowrap;letter-spacing:-0.33px;">1</div><div style="position:absolute;left:-273.90000000000003px;width:400px;text-align:right;top:39.900000000000006px;height:22.3px;line-height:22.3px;font-size:9.6px;color:#2d333a;font-weight:400;white-space:nowrap;letter-spacing:-0.33px;">1</div><div style="position:absolute;left:-195.7px;width:400px;text-align:right;top:39.900000000000006px;height:22.3px;line-height:22.3px;font-size:9.6px;color:#2d333a;font-weight:400;white-space:nowrap;letter-spacing:-0.33px;">1.00</div><div style="position:absolute;left:207px;top:40px;width:78px;height:22px;box-sizing:border-box;background:#1bb85c;border-left:1px solid #12b054;border-right:1px solid #12b054;border-top:1px solid #12b054;"></div><div style="position:absolute;left:-119.30000000000001px;width:400px;text-align:right;top:44.2px;height:12px;line-height:12px;font-size:9.8px;color:#fff;font-weight:400;white-space:nowrap;letter-spacing:-0.22px;-webkit-text-stroke:0.1px #fff;">1</div><div style="position:absolute;left:241.10000000000002px;top:55.400000000000006px;width:40.5px;height:4.2px;background:rgba(255,255,255,0.78);"></div><div style="position:absolute;left:4.600000000000023px;top:62.2px;height:22.3px;line-height:22.3px;font-size:9.6px;color:#2d333a;font-weight:400;white-space:nowrap;letter-spacing:-0.33px;">31615</div><div style="position:absolute;left:-307.7px;width:400px;text-align:right;top:62.2px;height:22.3px;line-height:22.3px;font-size:9.6px;color:#2d333a;font-weight:400;white-space:nowrap;letter-spacing:-0.33px;">1</div><div style="position:absolute;left:-273.90000000000003px;width:400px;text-align:right;top:62.2px;height:22.3px;line-height:22.3px;font-size:9.6px;color:#2d333a;font-weight:400;white-space:nowrap;letter-spacing:-0.33px;">1</div><div style="position:absolute;left:-195.7px;width:400px;text-align:right;top:62.2px;height:22.3px;line-height:22.3px;font-size:9.6px;color:#2d333a;font-weight:400;white-space:nowrap;letter-spacing:-0.33px;">1.00</div><div style="position:absolute;left:207px;top:62px;width:78px;height:22px;box-sizing:border-box;background:#1bb85c;border-left:1px solid #12b054;border-right:1px solid #12b054;border-bottom:1px solid #12b054;"></div><div style="position:absolute;left:-119.30000000000001px;width:400px;text-align:right;top:66.5px;height:12px;line-height:12px;font-size:9.8px;color:#fff;font-weight:400;white-space:nowrap;letter-spacing:-0.22px;-webkit-text-stroke:0.1px #fff;">1</div><div style="position:absolute;left:241.10000000000002px;top:77.7px;width:40.5px;height:4.2px;background:rgba(255,255,255,0.78);"></div><div style="position:absolute;left:4.600000000000023px;top:84.5px;height:22.3px;line-height:22.3px;font-size:9.6px;color:#2d333a;font-weight:400;white-space:nowrap;letter-spacing:-0.33px;">32048</div><div style="position:absolute;left:-307.7px;width:400px;text-align:right;top:84.5px;height:22.3px;line-height:22.3px;font-size:9.6px;color:#2d333a;font-weight:400;white-space:nowrap;letter-spacing:-0.33px;">0</div><div style="position:absolute;left:-273.90000000000003px;width:400px;text-align:right;top:84.5px;height:22.3px;line-height:22.3px;font-size:9.6px;color:#2d333a;font-weight:400;white-space:nowrap;letter-spacing:-0.33px;">0</div><div style="position:absolute;left:-195.7px;width:400px;text-align:right;top:84.5px;height:22.3px;line-height:22.3px;font-size:9.6px;color:#2d333a;font-weight:400;white-space:nowrap;letter-spacing:-0.33px;">0</div><div style="position:absolute;left:207px;top:84px;width:78px;height:23px;box-sizing:border-box;background:#f22e47;border-left:1px solid #fb1d42;border-right:1px solid #fb1d42;border-top:1px solid #fb1d42;border-bottom:1px solid #fb1d42;"></div><div style="position:absolute;left:-119.30000000000001px;width:400px;text-align:right;top:88.8px;height:12px;line-height:12px;font-size:9.8px;color:#fff;font-weight:400;white-space:nowrap;letter-spacing:-0.22px;-webkit-text-stroke:0.1px #fff;">0</div><div style="position:absolute;left:241.10000000000002px;top:100.0px;width:40.5px;height:4.2px;background:rgba(60,30,40,0.22);"></div><div style="position:absolute;left:4.600000000000023px;top:106.80000000000001px;height:22.3px;line-height:22.3px;font-size:9.6px;color:#2d333a;font-weight:400;white-space:nowrap;letter-spacing:-0.33px;">32134</div><div style="position:absolute;left:-307.7px;width:400px;text-align:right;top:106.80000000000001px;height:22.3px;line-height:22.3px;font-size:9.6px;color:#2d333a;font-weight:400;white-space:nowrap;letter-spacing:-0.33px;">1</div><div style="position:absolute;left:-273.90000000000003px;width:400px;text-align:right;top:106.80000000000001px;height:22.3px;line-height:22.3px;font-size:9.6px;color:#2d333a;font-weight:400;white-space:nowrap;letter-spacing:-0.33px;">1</div><div style="position:absolute;left:-195.7px;width:400px;text-align:right;top:106.80000000000001px;height:22.3px;line-height:22.3px;font-size:9.6px;color:#2d333a;font-weight:400;white-space:nowrap;letter-spacing:-0.33px;">1.00</div><div style="position:absolute;left:207px;top:107px;width:78px;height:22px;box-sizing:border-box;background:#1bb85c;border-left:1px solid #12b054;border-right:1px solid #12b054;border-top:1px solid #12b054;"></div><div style="position:absolute;left:-119.30000000000001px;width:400px;text-align:right;top:111.10000000000001px;height:12px;line-height:12px;font-size:9.8px;color:#fff;font-weight:400;white-space:nowrap;letter-spacing:-0.22px;-webkit-text-stroke:0.1px #fff;">1</div><div style="position:absolute;left:241.10000000000002px;top:122.30000000000001px;width:40.5px;height:4.2px;background:rgba(255,255,255,0.78);"></div><div style="position:absolute;left:4.600000000000023px;top:129.10000000000002px;height:22.3px;line-height:22.3px;font-size:9.6px;color:#2d333a;font-weight:400;white-space:nowrap;letter-spacing:-0.33px;">32247</div><div style="position:absolute;left:-307.7px;width:400px;text-align:right;top:129.10000000000002px;height:22.3px;line-height:22.3px;font-size:9.6px;color:#2d333a;font-weight:400;white-space:nowrap;letter-spacing:-0.33px;">1</div><div style="position:absolute;left:-273.90000000000003px;width:400px;text-align:right;top:129.10000000000002px;height:22.3px;line-height:22.3px;font-size:9.6px;color:#2d333a;font-weight:400;white-space:nowrap;letter-spacing:-0.33px;">1</div><div style="position:absolute;left:-195.7px;width:400px;text-align:right;top:129.10000000000002px;height:22.3px;line-height:22.3px;font-size:9.6px;color:#2d333a;font-weight:400;white-space:nowrap;letter-spacing:-0.33px;">1.00</div><div style="position:absolute;left:207px;top:129px;width:78px;height:22px;box-sizing:border-box;background:#1bb85c;border-left:1px solid #12b054;border-right:1px solid #12b054;border-bottom:1px solid #12b054;"></div><div style="position:absolute;left:-119.30000000000001px;width:400px;text-align:right;top:133.40000000000003px;height:12px;line-height:12px;font-size:9.8px;color:#fff;font-weight:400;white-space:nowrap;letter-spacing:-0.22px;-webkit-text-stroke:0.1px #fff;">1</div><div style="position:absolute;left:241.10000000000002px;top:144.60000000000002px;width:40.5px;height:4.2px;background:rgba(255,255,255,0.78);"></div><div style="position:absolute;left:4.600000000000023px;top:151.4px;height:22.3px;line-height:22.3px;font-size:9.6px;color:#2d333a;font-weight:400;white-space:nowrap;letter-spacing:-0.33px;">32248</div><div style="position:absolute;left:-307.7px;width:400px;text-align:right;top:151.4px;height:22.3px;line-height:22.3px;font-size:9.6px;color:#2d333a;font-weight:400;white-space:nowrap;letter-spacing:-0.33px;">0</div><div style="position:absolute;left:-273.90000000000003px;width:400px;text-align:right;top:151.4px;height:22.3px;line-height:22.3px;font-size:9.6px;color:#2d333a;font-weight:400;white-space:nowrap;letter-spacing:-0.33px;">0</div><div style="position:absolute;left:-195.7px;width:400px;text-align:right;top:151.4px;height:22.3px;line-height:22.3px;font-size:9.6px;color:#2d333a;font-weight:400;white-space:nowrap;letter-spacing:-0.33px;">0.75</div><div style="position:absolute;left:207px;top:151px;width:78px;height:23px;box-sizing:border-box;background:#f22e47;border-left:1px solid #fb1d42;border-right:1px solid #fb1d42;border-top:1px solid #fb1d42;border-bottom:1px solid #fb1d42;"></div><div style="position:absolute;left:-119.30000000000001px;width:400px;text-align:right;top:155.70000000000002px;height:12px;line-height:12px;font-size:9.8px;color:#fff;font-weight:400;white-space:nowrap;letter-spacing:-0.22px;-webkit-text-stroke:0.1px #fff;">0</div><div style="position:absolute;left:241.10000000000002px;top:166.9px;width:40.5px;height:4.2px;background:rgba(60,30,40,0.22);"></div><div style="position:absolute;left:4.600000000000023px;top:173.70000000000002px;height:22.3px;line-height:22.3px;font-size:9.6px;color:#2d333a;font-weight:400;white-space:nowrap;letter-spacing:-0.33px;">32252</div><div style="position:absolute;left:-307.7px;width:400px;text-align:right;top:173.70000000000002px;height:22.3px;line-height:22.3px;font-size:9.6px;color:#2d333a;font-weight:400;white-space:nowrap;letter-spacing:-0.33px;">1</div><div style="position:absolute;left:-273.90000000000003px;width:400px;text-align:right;top:173.70000000000002px;height:22.3px;line-height:22.3px;font-size:9.6px;color:#2d333a;font-weight:400;white-space:nowrap;letter-spacing:-0.33px;">1</div><div style="position:absolute;left:-195.7px;width:400px;text-align:right;top:173.70000000000002px;height:22.3px;line-height:22.3px;font-size:9.6px;color:#2d333a;font-weight:400;white-space:nowrap;letter-spacing:-0.33px;">1.00</div><div style="position:absolute;left:207px;top:174px;width:78px;height:22px;box-sizing:border-box;background:#1bb85c;border-left:1px solid #12b054;border-right:1px solid #12b054;border-top:1px solid #12b054;"></div><div style="position:absolute;left:-119.30000000000001px;width:400px;text-align:right;top:178.00000000000003px;height:12px;line-height:12px;font-size:9.8px;color:#fff;font-weight:400;white-space:nowrap;letter-spacing:-0.22px;-webkit-text-stroke:0.1px #fff;">1</div><div style="position:absolute;left:241.10000000000002px;top:189.20000000000002px;width:40.5px;height:4.2px;background:rgba(255,255,255,0.78);"></div><div style="position:absolute;left:0px;top:61.7px;width:285px;height:1px;background:rgba(30,40,90,0.09);"></div><div style="position:absolute;left:0px;top:84.0px;width:285px;height:1px;background:rgba(30,40,90,0.09);"></div><div style="position:absolute;left:0px;top:106.3px;width:285px;height:1px;background:rgba(30,40,90,0.09);"></div><div style="position:absolute;left:0px;top:128.60000000000002px;width:285px;height:1px;background:rgba(30,40,90,0.09);"></div><div style="position:absolute;left:0px;top:150.90000000000003px;width:285px;height:1px;background:rgba(30,40,90,0.09);"></div><div style="position:absolute;left:0px;top:173.20000000000002px;width:285px;height:1px;background:rgba(30,40,90,0.09);"></div><div style="position:absolute;left:0px;top:195.50000000000003px;width:285px;height:1px;background:rgba(30,40,90,0.09);"></div><div style="position:absolute;left:131px;top:192.5px;width:29px;height:1.5px;background:#cfd3de;border-radius:1px;"></div><div style="position:absolute;left:0px;top:0px;width:285px;height:195px;box-sizing:border-box;border:1px solid #e1e3ec;"></div></div>
<div style="position:absolute;left:901px;top:102px;width:285px;height:195px;background:#fff;overflow:hidden;"><div style="position:absolute;left:4.8px;top:-0.5px;height:21px;line-height:21px;font-size:10.35px;color:#2f363d;font-weight:400;white-space:nowrap;">Web Document Search: Aspect Critic == 1 &amp;&amp; Con...</div><div style="position:absolute;left:0px;top:20px;width:285px;height:1px;background:#e1e3ec;"></div><div style="position:absolute;left:0px;top:39px;width:285px;height:1px;background:#e1e3ec;"></div><div style="position:absolute;left:0px;top:186px;width:285px;height:9px;background:linear-gradient(rgba(255,255,255,0),rgba(232,234,240,1));"></div><svg style="position:absolute;left:6px;top:25.300000000000004px" width="9" height="9" viewBox="0 0 9 9" fill="none" stroke="#3d434c" stroke-width="0.9"><path d="M4.5 1v8M1 4.4L4.5 0.9 8 4.4"/></svg><div style="position:absolute;left:19.799999999999955px;top:22.0px;height:18.400000000000006px;line-height:18.400000000000006px;font-size:8px;color:#1f262d;font-weight:700;white-space:nowrap;letter-spacing:-0.25px;">TICKET ID</div><div style="position:absolute;left:-308.70000000000005px;width:400px;text-align:right;top:22.0px;height:18.400000000000006px;line-height:18.400000000000006px;font-size:8.2px;color:#1f262d;font-weight:700;white-space:nowrap;">解決性</div><div style="position:absolute;left:-275px;width:400px;text-align:right;top:22.0px;height:18.400000000000006px;line-height:18.400000000000006px;font-size:8.2px;color:#1f262d;font-weight:700;white-space:nowrap;">有用性</div><div style="position:absolute;left:-201px;width:400px;text-align:right;top:22.0px;height:18.400000000000006px;line-height:18.400000000000006px;font-size:8.2px;color:#1f262d;font-weight:700;white-space:nowrap;">コンテキストの...</div><div style="position:absolute;left:-120px;width:400px;text-align:right;top:22.0px;height:18.400000000000006px;line-height:18.400000000000006px;font-size:8.2px;color:#1f262d;font-weight:700;white-space:nowrap;">判定</div><div style="position:absolute;left:4.600000000000023px;top:39.900000000000006px;height:22.3px;line-height:22.3px;font-size:9.6px;color:#2d333a;font-weight:400;white-space:nowrap;letter-spacing:-0.33px;">27293</div><div style="position:absolute;left:-307.7px;width:400px;text-align:right;top:39.900000000000006px;height:22.3px;line-height:22.3px;font-size:9.6px;color:#2d333a;font-weight:400;white-space:nowrap;letter-spacing:-0.33px;">1</div><div style="position:absolute;left:-273.90000000000003px;width:400px;text-align:right;top:39.900000000000006px;height:22.3px;line-height:22.3px;font-size:9.6px;color:#2d333a;font-weight:400;white-space:nowrap;letter-spacing:-0.33px;">1</div><div style="position:absolute;left:-195.7px;width:400px;text-align:right;top:39.900000000000006px;height:22.3px;line-height:22.3px;font-size:9.6px;color:#2d333a;font-weight:400;white-space:nowrap;letter-spacing:-0.33px;">1.00</div><div style="position:absolute;left:207px;top:40px;width:78px;height:22px;box-sizing:border-box;background:#1bb85c;border-left:1px solid #12b054;border-right:1px solid #12b054;border-top:1px solid #12b054;"></div><div style="position:absolute;left:-119.30000000000001px;width:400px;text-align:right;top:44.2px;height:12px;line-height:12px;font-size:9.8px;color:#fff;font-weight:400;white-space:nowrap;letter-spacing:-0.22px;-webkit-text-stroke:0.1px #fff;">1</div><div style="position:absolute;left:241.10000000000002px;top:55.400000000000006px;width:40.5px;height:4.2px;background:rgba(255,255,255,0.78);"></div><div style="position:absolute;left:4.600000000000023px;top:62.2px;height:22.3px;line-height:22.3px;font-size:9.6px;color:#2d333a;font-weight:400;white-space:nowrap;letter-spacing:-0.33px;">31615</div><div style="position:absolute;left:-307.7px;width:400px;text-align:right;top:62.2px;height:22.3px;line-height:22.3px;font-size:9.6px;color:#2d333a;font-weight:400;white-space:nowrap;letter-spacing:-0.33px;">1</div><div style="position:absolute;left:-273.90000000000003px;width:400px;text-align:right;top:62.2px;height:22.3px;line-height:22.3px;font-size:9.6px;color:#2d333a;font-weight:400;white-space:nowrap;letter-spacing:-0.33px;">1</div><div style="position:absolute;left:-195.7px;width:400px;text-align:right;top:62.2px;height:22.3px;line-height:22.3px;font-size:9.6px;color:#2d333a;font-weight:400;white-space:nowrap;letter-spacing:-0.33px;">1.00</div><div style="position:absolute;left:207px;top:62px;width:78px;height:22px;box-sizing:border-box;background:#1bb85c;border-left:1px solid #12b054;border-right:1px solid #12b054;border-bottom:1px solid #12b054;"></div><div style="position:absolute;left:-119.30000000000001px;width:400px;text-align:right;top:66.5px;height:12px;line-height:12px;font-size:9.8px;color:#fff;font-weight:400;white-space:nowrap;letter-spacing:-0.22px;-webkit-text-stroke:0.1px #fff;">1</div><div style="position:absolute;left:241.10000000000002px;top:77.7px;width:40.5px;height:4.2px;background:rgba(255,255,255,0.78);"></div><div style="position:absolute;left:4.600000000000023px;top:84.5px;height:22.3px;line-height:22.3px;font-size:9.6px;color:#2d333a;font-weight:400;white-space:nowrap;letter-spacing:-0.33px;">32048</div><div style="position:absolute;left:-307.7px;width:400px;text-align:right;top:84.5px;height:22.3px;line-height:22.3px;font-size:9.6px;color:#2d333a;font-weight:400;white-space:nowrap;letter-spacing:-0.33px;">0</div><div style="position:absolute;left:-273.90000000000003px;width:400px;text-align:right;top:84.5px;height:22.3px;line-height:22.3px;font-size:9.6px;color:#2d333a;font-weight:400;white-space:nowrap;letter-spacing:-0.33px;">0</div><div style="position:absolute;left:-195.7px;width:400px;text-align:right;top:84.5px;height:22.3px;line-height:22.3px;font-size:9.6px;color:#2d333a;font-weight:400;white-space:nowrap;letter-spacing:-0.33px;">0</div><div style="position:absolute;left:207px;top:84px;width:78px;height:23px;box-sizing:border-box;background:#f22e47;border-left:1px solid #fb1d42;border-right:1px solid #fb1d42;border-top:1px solid #fb1d42;border-bottom:1px solid #fb1d42;"></div><div style="position:absolute;left:-119.30000000000001px;width:400px;text-align:right;top:88.8px;height:12px;line-height:12px;font-size:9.8px;color:#fff;font-weight:400;white-space:nowrap;letter-spacing:-0.22px;-webkit-text-stroke:0.1px #fff;">0</div><div style="position:absolute;left:241.10000000000002px;top:100.0px;width:40.5px;height:4.2px;background:rgba(60,30,40,0.22);"></div><div style="position:absolute;left:4.600000000000023px;top:106.80000000000001px;height:22.3px;line-height:22.3px;font-size:9.6px;color:#2d333a;font-weight:400;white-space:nowrap;letter-spacing:-0.33px;">32134</div><div style="position:absolute;left:-307.7px;width:400px;text-align:right;top:106.80000000000001px;height:22.3px;line-height:22.3px;font-size:9.6px;color:#2d333a;font-weight:400;white-space:nowrap;letter-spacing:-0.33px;">1</div><div style="position:absolute;left:-273.90000000000003px;width:400px;text-align:right;top:106.80000000000001px;height:22.3px;line-height:22.3px;font-size:9.6px;color:#2d333a;font-weight:400;white-space:nowrap;letter-spacing:-0.33px;">1</div><div style="position:absolute;left:-195.7px;width:400px;text-align:right;top:106.80000000000001px;height:22.3px;line-height:22.3px;font-size:9.6px;color:#2d333a;font-weight:400;white-space:nowrap;letter-spacing:-0.33px;">1.00</div><div style="position:absolute;left:207px;top:107px;width:78px;height:22px;box-sizing:border-box;background:#1bb85c;border-left:1px solid #12b054;border-right:1px solid #12b054;border-top:1px solid #12b054;"></div><div style="position:absolute;left:-119.30000000000001px;width:400px;text-align:right;top:111.10000000000001px;height:12px;line-height:12px;font-size:9.8px;color:#fff;font-weight:400;white-space:nowrap;letter-spacing:-0.22px;-webkit-text-stroke:0.1px #fff;">1</div><div style="position:absolute;left:241.10000000000002px;top:122.30000000000001px;width:40.5px;height:4.2px;background:rgba(255,255,255,0.78);"></div><div style="position:absolute;left:4.600000000000023px;top:129.10000000000002px;height:22.3px;line-height:22.3px;font-size:9.6px;color:#2d333a;font-weight:400;white-space:nowrap;letter-spacing:-0.33px;">32247</div><div style="position:absolute;left:-307.7px;width:400px;text-align:right;top:129.10000000000002px;height:22.3px;line-height:22.3px;font-size:9.6px;color:#2d333a;font-weight:400;white-space:nowrap;letter-spacing:-0.33px;">1</div><div style="position:absolute;left:-273.90000000000003px;width:400px;text-align:right;top:129.10000000000002px;height:22.3px;line-height:22.3px;font-size:9.6px;color:#2d333a;font-weight:400;white-space:nowrap;letter-spacing:-0.33px;">1</div><div style="position:absolute;left:-195.7px;width:400px;text-align:right;top:129.10000000000002px;height:22.3px;line-height:22.3px;font-size:9.6px;color:#2d333a;font-weight:400;white-space:nowrap;letter-spacing:-0.33px;">1.00</div><div style="position:absolute;left:207px;top:129px;width:78px;height:22px;box-sizing:border-box;background:#1bb85c;border-left:1px solid #12b054;border-right:1px solid #12b054;border-bottom:1px solid #12b054;"></div><div style="position:absolute;left:-119.30000000000001px;width:400px;text-align:right;top:133.40000000000003px;height:12px;line-height:12px;font-size:9.8px;color:#fff;font-weight:400;white-space:nowrap;letter-spacing:-0.22px;-webkit-text-stroke:0.1px #fff;">1</div><div style="position:absolute;left:241.10000000000002px;top:144.60000000000002px;width:40.5px;height:4.2px;background:rgba(255,255,255,0.78);"></div><div style="position:absolute;left:4.600000000000023px;top:151.4px;height:22.3px;line-height:22.3px;font-size:9.6px;color:#2d333a;font-weight:400;white-space:nowrap;letter-spacing:-0.33px;">32248</div><div style="position:absolute;left:-307.7px;width:400px;text-align:right;top:151.4px;height:22.3px;line-height:22.3px;font-size:9.6px;color:#2d333a;font-weight:400;white-space:nowrap;letter-spacing:-0.33px;">0</div><div style="position:absolute;left:-273.90000000000003px;width:400px;text-align:right;top:151.4px;height:22.3px;line-height:22.3px;font-size:9.6px;color:#2d333a;font-weight:400;white-space:nowrap;letter-spacing:-0.33px;">0</div><div style="position:absolute;left:-195.7px;width:400px;text-align:right;top:151.4px;height:22.3px;line-height:22.3px;font-size:9.6px;color:#2d333a;font-weight:400;white-space:nowrap;letter-spacing:-0.33px;">0.75</div><div style="position:absolute;left:207px;top:151px;width:78px;height:23px;box-sizing:border-box;background:#f22e47;border-left:1px solid #fb1d42;border-right:1px solid #fb1d42;border-top:1px solid #fb1d42;border-bottom:1px solid #fb1d42;"></div><div style="position:absolute;left:-119.30000000000001px;width:400px;text-align:right;top:155.70000000000002px;height:12px;line-height:12px;font-size:9.8px;color:#fff;font-weight:400;white-space:nowrap;letter-spacing:-0.22px;-webkit-text-stroke:0.1px #fff;">0</div><div style="position:absolute;left:241.10000000000002px;top:166.9px;width:40.5px;height:4.2px;background:rgba(60,30,40,0.22);"></div><div style="position:absolute;left:4.600000000000023px;top:173.70000000000002px;height:22.3px;line-height:22.3px;font-size:9.6px;color:#2d333a;font-weight:400;white-space:nowrap;letter-spacing:-0.33px;">32252</div><div style="position:absolute;left:-307.7px;width:400px;text-align:right;top:173.70000000000002px;height:22.3px;line-height:22.3px;font-size:9.6px;color:#2d333a;font-weight:400;white-space:nowrap;letter-spacing:-0.33px;">1</div><div style="position:absolute;left:-273.90000000000003px;width:400px;text-align:right;top:173.70000000000002px;height:22.3px;line-height:22.3px;font-size:9.6px;color:#2d333a;font-weight:400;white-space:nowrap;letter-spacing:-0.33px;">1</div><div style="position:absolute;left:-195.7px;width:400px;text-align:right;top:173.70000000000002px;height:22.3px;line-height:22.3px;font-size:9.6px;color:#2d333a;font-weight:400;white-space:nowrap;letter-spacing:-0.33px;">1.00</div><div style="position:absolute;left:207px;top:174px;width:78px;height:22px;box-sizing:border-box;background:#1bb85c;border-left:1px solid #12b054;border-right:1px solid #12b054;border-top:1px solid #12b054;"></div><div style="position:absolute;left:-119.30000000000001px;width:400px;text-align:right;top:178.00000000000003px;height:12px;line-height:12px;font-size:9.8px;color:#fff;font-weight:400;white-space:nowrap;letter-spacing:-0.22px;-webkit-text-stroke:0.1px #fff;">1</div><div style="position:absolute;left:241.10000000000002px;top:189.20000000000002px;width:40.5px;height:4.2px;background:rgba(255,255,255,0.78);"></div><div style="position:absolute;left:0px;top:61.7px;width:285px;height:1px;background:rgba(30,40,90,0.09);"></div><div style="position:absolute;left:0px;top:84.0px;width:285px;height:1px;background:rgba(30,40,90,0.09);"></div><div style="position:absolute;left:0px;top:106.3px;width:285px;height:1px;background:rgba(30,40,90,0.09);"></div><div style="position:absolute;left:0px;top:128.60000000000002px;width:285px;height:1px;background:rgba(30,40,90,0.09);"></div><div style="position:absolute;left:0px;top:150.90000000000003px;width:285px;height:1px;background:rgba(30,40,90,0.09);"></div><div style="position:absolute;left:0px;top:173.20000000000002px;width:285px;height:1px;background:rgba(30,40,90,0.09);"></div><div style="position:absolute;left:0px;top:195.50000000000003px;width:285px;height:1px;background:rgba(30,40,90,0.09);"></div><div style="position:absolute;left:131px;top:192.5px;width:29px;height:1.5px;background:#cfd3de;border-radius:1px;"></div><div style="position:absolute;left:0px;top:0px;width:285px;height:195px;box-sizing:border-box;border:1px solid #e1e3ec;"></div></div>
<div style="position:absolute;left:611px;top:353px;width:285px;height:195px;background:#fff;overflow:hidden;"><div style="position:absolute;left:4.8px;top:-0.5px;height:21.19999999999999px;line-height:21.19999999999999px;font-size:10.35px;color:#2f363d;font-weight:400;white-space:nowrap;">Knowledge Search: Aspect Critic == 1 &amp;&amp; Context ...</div><div style="position:absolute;left:0px;top:21px;width:285px;height:1px;background:#e1e3ec;"></div><div style="position:absolute;left:0px;top:39px;width:285px;height:1px;background:#e1e3ec;"></div><div style="position:absolute;left:0px;top:186px;width:285px;height:9px;background:linear-gradient(rgba(255,255,255,0),rgba(232,234,240,1));"></div><svg style="position:absolute;left:6px;top:25.500000000000007px" width="9" height="9" viewBox="0 0 9 9" fill="none" stroke="#3d434c" stroke-width="0.9"><path d="M4.5 1v8M1 4.4L4.5 0.9 8 4.4"/></svg><div style="position:absolute;left:19.799999999999955px;top:22.19999999999999px;height:18.400000000000034px;line-height:18.400000000000034px;font-size:8px;color:#1f262d;font-weight:700;white-space:nowrap;letter-spacing:-0.25px;">TICKET ...</div><div style="position:absolute;left:-309px;width:400px;text-align:right;top:22.19999999999999px;height:18.400000000000034px;line-height:18.400000000000034px;font-size:8.2px;color:#1f262d;font-weight:700;white-space:nowrap;">解決性</div><div style="position:absolute;left:-275.20000000000005px;width:400px;text-align:right;top:22.19999999999999px;height:18.400000000000034px;line-height:18.400000000000034px;font-size:8.2px;color:#1f262d;font-weight:700;white-space:nowrap;">整合性</div><div style="position:absolute;left:-241.39999999999998px;width:400px;text-align:right;top:22.19999999999999px;height:18.400000000000034px;line-height:18.400000000000034px;font-size:8.2px;color:#1f262d;font-weight:700;white-space:nowrap;">有用性</div><div style="position:absolute;left:-185px;width:400px;text-align:right;top:22.19999999999999px;height:18.400000000000034px;line-height:18.400000000000034px;font-size:8.2px;color:#1f262d;font-weight:700;white-space:nowrap;">コンテキス...</div><div style="position:absolute;left:-119.5px;width:400px;text-align:right;top:22.19999999999999px;height:18.400000000000034px;line-height:18.400000000000034px;font-size:8.2px;color:#1f262d;font-weight:700;white-space:nowrap;">判定</div><div style="position:absolute;left:4.600000000000023px;top:39.60000000000002px;height:22.3px;line-height:22.3px;font-size:9.6px;color:#2d333a;font-weight:400;white-space:nowrap;letter-spacing:-0.33px;">27293</div><div style="position:absolute;left:-307.90000000000003px;width:400px;text-align:right;top:39.60000000000002px;height:22.3px;line-height:22.3px;font-size:9.6px;color:#2d333a;font-weight:400;white-space:nowrap;letter-spacing:-0.33px;">1</div><div style="position:absolute;left:-274.2px;width:400px;text-align:right;top:39.60000000000002px;height:22.3px;line-height:22.3px;font-size:9.6px;color:#2d333a;font-weight:400;white-space:nowrap;letter-spacing:-0.33px;">1</div><div style="position:absolute;left:-240.40000000000003px;width:400px;text-align:right;top:39.60000000000002px;height:22.3px;line-height:22.3px;font-size:9.6px;color:#2d333a;font-weight:400;white-space:nowrap;letter-spacing:-0.33px;">1</div><div style="position:absolute;left:-178.7px;width:400px;text-align:right;top:39.60000000000002px;height:22.3px;line-height:22.3px;font-size:9.6px;color:#2d333a;font-weight:400;white-space:nowrap;letter-spacing:-0.33px;">1.00</div><div style="position:absolute;left:224px;top:40px;width:61px;height:22px;box-sizing:border-box;background:#1bb85c;border-left:1px solid #12b054;border-right:1px solid #12b054;border-top:1px solid #12b054;"></div><div style="position:absolute;left:-119.30000000000001px;width:400px;text-align:right;top:44.40000000000002px;height:12px;line-height:12px;font-size:9.8px;color:#fff;font-weight:400;white-space:nowrap;letter-spacing:-0.22px;-webkit-text-stroke:0.1px #fff;">1</div><div style="position:absolute;left:241.10000000000002px;top:55.60000000000002px;width:40.5px;height:4.2px;background:rgba(255,255,255,0.78);"></div><div style="position:absolute;left:4.600000000000023px;top:61.90000000000002px;height:22.3px;line-height:22.3px;font-size:9.6px;color:#2d333a;font-weight:400;white-space:nowrap;letter-spacing:-0.33px;">31615</div><div style="position:absolute;left:-307.90000000000003px;width:400px;text-align:right;top:61.90000000000002px;height:22.3px;line-height:22.3px;font-size:9.6px;color:#2d333a;font-weight:400;white-space:nowrap;letter-spacing:-0.33px;">1</div><div style="position:absolute;left:-274.2px;width:400px;text-align:right;top:61.90000000000002px;height:22.3px;line-height:22.3px;font-size:9.6px;color:#2d333a;font-weight:400;white-space:nowrap;letter-spacing:-0.33px;">1</div><div style="position:absolute;left:-240.40000000000003px;width:400px;text-align:right;top:61.90000000000002px;height:22.3px;line-height:22.3px;font-size:9.6px;color:#2d333a;font-weight:400;white-space:nowrap;letter-spacing:-0.33px;">1</div><div style="position:absolute;left:-178.7px;width:400px;text-align:right;top:61.90000000000002px;height:22.3px;line-height:22.3px;font-size:9.6px;color:#2d333a;font-weight:400;white-space:nowrap;letter-spacing:-0.33px;">1.00</div><div style="position:absolute;left:224px;top:62px;width:61px;height:23px;box-sizing:border-box;background:#1bb85c;border-left:1px solid #12b054;border-right:1px solid #12b054;border-bottom:1px solid #12b054;"></div><div style="position:absolute;left:-119.30000000000001px;width:400px;text-align:right;top:66.70000000000002px;height:12px;line-height:12px;font-size:9.8px;color:#fff;font-weight:400;white-space:nowrap;letter-spacing:-0.22px;-webkit-text-stroke:0.1px #fff;">1</div><div style="position:absolute;left:241.10000000000002px;top:77.90000000000002px;width:40.5px;height:4.2px;background:rgba(255,255,255,0.78);"></div><div style="position:absolute;left:4.600000000000023px;top:84.20000000000002px;height:22.3px;line-height:22.3px;font-size:9.6px;color:#2d333a;font-weight:400;white-space:nowrap;letter-spacing:-0.33px;">32134</div><div style="position:absolute;left:-307.90000000000003px;width:400px;text-align:right;top:84.20000000000002px;height:22.3px;line-height:22.3px;font-size:9.6px;color:#2d333a;font-weight:400;white-space:nowrap;letter-spacing:-0.33px;">0</div><div style="position:absolute;left:-274.2px;width:400px;text-align:right;top:84.20000000000002px;height:22.3px;line-height:22.3px;font-size:9.6px;color:#2d333a;font-weight:400;white-space:nowrap;letter-spacing:-0.33px;">0</div><div style="position:absolute;left:-240.40000000000003px;width:400px;text-align:right;top:84.20000000000002px;height:22.3px;line-height:22.3px;font-size:9.6px;color:#2d333a;font-weight:400;white-space:nowrap;letter-spacing:-0.33px;">1</div><div style="position:absolute;left:-178.7px;width:400px;text-align:right;top:84.20000000000002px;height:22.3px;line-height:22.3px;font-size:9.6px;color:#2d333a;font-weight:400;white-space:nowrap;letter-spacing:-0.33px;">0.75</div><div style="position:absolute;left:224px;top:85px;width:61px;height:22px;box-sizing:border-box;background:#f22e47;border-left:1px solid #fb1d42;border-right:1px solid #fb1d42;border-top:1px solid #fb1d42;"></div><div style="position:absolute;left:-119.30000000000001px;width:400px;text-align:right;top:89.00000000000001px;height:12px;line-height:12px;font-size:9.8px;color:#fff;font-weight:400;white-space:nowrap;letter-spacing:-0.22px;-webkit-text-stroke:0.1px #fff;">0</div><div style="position:absolute;left:241.10000000000002px;top:100.20000000000002px;width:40.5px;height:4.2px;background:rgba(60,30,40,0.22);"></div><div style="position:absolute;left:4.600000000000023px;top:106.50000000000003px;height:22.3px;line-height:22.3px;font-size:9.6px;color:#2d333a;font-weight:400;white-space:nowrap;letter-spacing:-0.33px;">32247</div><div style="position:absolute;left:-307.90000000000003px;width:400px;text-align:right;top:106.50000000000003px;height:22.3px;line-height:22.3px;font-size:9.6px;color:#2d333a;font-weight:400;white-space:nowrap;letter-spacing:-0.33px;">0</div><div style="position:absolute;left:-274.2px;width:400px;text-align:right;top:106.50000000000003px;height:22.3px;line-height:22.3px;font-size:9.6px;color:#2d333a;font-weight:400;white-space:nowrap;letter-spacing:-0.33px;">0</div><div style="position:absolute;left:-240.40000000000003px;width:400px;text-align:right;top:106.50000000000003px;height:22.3px;line-height:22.3px;font-size:9.6px;color:#2d333a;font-weight:400;white-space:nowrap;letter-spacing:-0.33px;">1</div><div style="position:absolute;left:-178.7px;width:400px;text-align:right;top:106.50000000000003px;height:22.3px;line-height:22.3px;font-size:9.6px;color:#2d333a;font-weight:400;white-space:nowrap;letter-spacing:-0.33px;">0.50</div><div style="position:absolute;left:224px;top:107px;width:61px;height:22px;box-sizing:border-box;background:#f22e47;border-left:1px solid #fb1d42;border-right:1px solid #fb1d42;"></div><div style="position:absolute;left:-119.30000000000001px;width:400px;text-align:right;top:111.30000000000003px;height:12px;line-height:12px;font-size:9.8px;color:#fff;font-weight:400;white-space:nowrap;letter-spacing:-0.22px;-webkit-text-stroke:0.1px #fff;">0</div><div style="position:absolute;left:241.10000000000002px;top:122.50000000000003px;width:40.5px;height:4.2px;background:rgba(60,30,40,0.22);"></div><div style="position:absolute;left:4.600000000000023px;top:128.8px;height:22.3px;line-height:22.3px;font-size:9.6px;color:#2d333a;font-weight:400;white-space:nowrap;letter-spacing:-0.33px;">32252</div><div style="position:absolute;left:-307.90000000000003px;width:400px;text-align:right;top:128.8px;height:22.3px;line-height:22.3px;font-size:9.6px;color:#2d333a;font-weight:400;white-space:nowrap;letter-spacing:-0.33px;">1</div><div style="position:absolute;left:-274.2px;width:400px;text-align:right;top:128.8px;height:22.3px;line-height:22.3px;font-size:9.6px;color:#2d333a;font-weight:400;white-space:nowrap;letter-spacing:-0.33px;">1</div><div style="position:absolute;left:-240.40000000000003px;width:400px;text-align:right;top:128.8px;height:22.3px;line-height:22.3px;font-size:9.6px;color:#2d333a;font-weight:400;white-space:nowrap;letter-spacing:-0.33px;">1</div><div style="position:absolute;left:-178.7px;width:400px;text-align:right;top:128.8px;height:22.3px;line-height:22.3px;font-size:9.6px;color:#2d333a;font-weight:400;white-space:nowrap;letter-spacing:-0.33px;">0.75</div><div style="position:absolute;left:224px;top:129px;width:61px;height:23px;box-sizing:border-box;background:#f22e47;border-left:1px solid #fb1d42;border-right:1px solid #fb1d42;"></div><div style="position:absolute;left:-119.30000000000001px;width:400px;text-align:right;top:133.60000000000002px;height:12px;line-height:12px;font-size:9.8px;color:#fff;font-weight:400;white-space:nowrap;letter-spacing:-0.22px;-webkit-text-stroke:0.1px #fff;">0</div><div style="position:absolute;left:241.10000000000002px;top:144.8px;width:40.5px;height:4.2px;background:rgba(60,30,40,0.22);"></div><div style="position:absolute;left:4.600000000000023px;top:151.10000000000002px;height:22.3px;line-height:22.3px;font-size:9.6px;color:#2d333a;font-weight:400;white-space:nowrap;letter-spacing:-0.33px;">32254</div><div style="position:absolute;left:-307.90000000000003px;width:400px;text-align:right;top:151.10000000000002px;height:22.3px;line-height:22.3px;font-size:9.6px;color:#2d333a;font-weight:400;white-space:nowrap;letter-spacing:-0.33px;">0</div><div style="position:absolute;left:-274.2px;width:400px;text-align:right;top:151.10000000000002px;height:22.3px;line-height:22.3px;font-size:9.6px;color:#2d333a;font-weight:400;white-space:nowrap;letter-spacing:-0.33px;">1</div><div style="position:absolute;left:-240.40000000000003px;width:400px;text-align:right;top:151.10000000000002px;height:22.3px;line-height:22.3px;font-size:9.6px;color:#2d333a;font-weight:400;white-space:nowrap;letter-spacing:-0.33px;">1</div><div style="position:absolute;left:-178.7px;width:400px;text-align:right;top:151.10000000000002px;height:22.3px;line-height:22.3px;font-size:9.6px;color:#2d333a;font-weight:400;white-space:nowrap;letter-spacing:-0.33px;">0.25</div><div style="position:absolute;left:224px;top:152px;width:61px;height:22px;box-sizing:border-box;background:#f22e47;border-left:1px solid #fb1d42;border-right:1px solid #fb1d42;"></div><div style="position:absolute;left:-119.30000000000001px;width:400px;text-align:right;top:155.90000000000003px;height:12px;line-height:12px;font-size:9.8px;color:#fff;font-weight:400;white-space:nowrap;letter-spacing:-0.22px;-webkit-text-stroke:0.1px #fff;">0</div><div style="position:absolute;left:241.10000000000002px;top:167.10000000000002px;width:40.5px;height:4.2px;background:rgba(60,30,40,0.22);"></div><div style="position:absolute;left:4.600000000000023px;top:173.40000000000003px;height:22.3px;line-height:22.3px;font-size:9.6px;color:#2d333a;font-weight:400;white-space:nowrap;letter-spacing:-0.33px;">32255</div><div style="position:absolute;left:-307.90000000000003px;width:400px;text-align:right;top:173.40000000000003px;height:22.3px;line-height:22.3px;font-size:9.6px;color:#2d333a;font-weight:400;white-space:nowrap;letter-spacing:-0.33px;">1</div><div style="position:absolute;left:-274.2px;width:400px;text-align:right;top:173.40000000000003px;height:22.3px;line-height:22.3px;font-size:9.6px;color:#2d333a;font-weight:400;white-space:nowrap;letter-spacing:-0.33px;">0</div><div style="position:absolute;left:-240.40000000000003px;width:400px;text-align:right;top:173.40000000000003px;height:22.3px;line-height:22.3px;font-size:9.6px;color:#2d333a;font-weight:400;white-space:nowrap;letter-spacing:-0.33px;">1</div><div style="position:absolute;left:-178.7px;width:400px;text-align:right;top:173.40000000000003px;height:22.3px;line-height:22.3px;font-size:9.6px;color:#2d333a;font-weight:400;white-space:nowrap;letter-spacing:-0.33px;">1.00</div><div style="position:absolute;left:224px;top:174px;width:61px;height:22px;box-sizing:border-box;background:#f22e47;border-left:1px solid #fb1d42;border-right:1px solid #fb1d42;"></div><div style="position:absolute;left:-119.30000000000001px;width:400px;text-align:right;top:178.20000000000005px;height:12px;line-height:12px;font-size:9.8px;color:#fff;font-weight:400;white-space:nowrap;letter-spacing:-0.22px;-webkit-text-stroke:0.1px #fff;">0</div><div style="position:absolute;left:241.10000000000002px;top:189.40000000000003px;width:40.5px;height:4.2px;background:rgba(60,30,40,0.22);"></div><div style="position:absolute;left:0px;top:61.90000000000002px;width:285px;height:1px;background:rgba(30,40,90,0.09);"></div><div style="position:absolute;left:0px;top:84.20000000000002px;width:285px;height:1px;background:rgba(30,40,90,0.09);"></div><div style="position:absolute;left:0px;top:106.50000000000001px;width:285px;height:1px;background:rgba(30,40,90,0.09);"></div><div style="position:absolute;left:0px;top:128.80000000000004px;width:285px;height:1px;background:rgba(30,40,90,0.09);"></div><div style="position:absolute;left:0px;top:151.10000000000002px;width:285px;height:1px;background:rgba(30,40,90,0.09);"></div><div style="position:absolute;left:0px;top:173.40000000000003px;width:285px;height:1px;background:rgba(30,40,90,0.09);"></div><div style="position:absolute;left:0px;top:195.70000000000005px;width:285px;height:1px;background:rgba(30,40,90,0.09);"></div><div style="position:absolute;left:131px;top:192.5px;width:29px;height:1.5px;background:#cfd3de;border-radius:1px;"></div><div style="position:absolute;left:0px;top:0px;width:285px;height:195px;box-sizing:border-box;border:1px solid #e1e3ec;"></div></div>
<div style="position:absolute;left:901px;top:353px;width:285px;height:195px;background:#fff;overflow:hidden;"><div style="position:absolute;left:4.8px;top:-0.5px;height:21.19999999999999px;line-height:21.19999999999999px;font-size:10.35px;color:#2f363d;font-weight:400;white-space:nowrap;">Knowledge Search: Aspect Critic == 1 &amp;&amp; Context ...</div><div style="position:absolute;left:0px;top:21px;width:285px;height:1px;background:#e1e3ec;"></div><div style="position:absolute;left:0px;top:39px;width:285px;height:1px;background:#e1e3ec;"></div><div style="position:absolute;left:0px;top:186px;width:285px;height:9px;background:linear-gradient(rgba(255,255,255,0),rgba(232,234,240,1));"></div><svg style="position:absolute;left:6px;top:25.500000000000007px" width="9" height="9" viewBox="0 0 9 9" fill="none" stroke="#3d434c" stroke-width="0.9"><path d="M4.5 1v8M1 4.4L4.5 0.9 8 4.4"/></svg><div style="position:absolute;left:19.799999999999955px;top:22.19999999999999px;height:18.400000000000034px;line-height:18.400000000000034px;font-size:8px;color:#1f262d;font-weight:700;white-space:nowrap;letter-spacing:-0.25px;">TICKET ...</div><div style="position:absolute;left:-309px;width:400px;text-align:right;top:22.19999999999999px;height:18.400000000000034px;line-height:18.400000000000034px;font-size:8.2px;color:#1f262d;font-weight:700;white-space:nowrap;">解決性</div><div style="position:absolute;left:-275.20000000000005px;width:400px;text-align:right;top:22.19999999999999px;height:18.400000000000034px;line-height:18.400000000000034px;font-size:8.2px;color:#1f262d;font-weight:700;white-space:nowrap;">整合性</div><div style="position:absolute;left:-241.4000000000001px;width:400px;text-align:right;top:22.19999999999999px;height:18.400000000000034px;line-height:18.400000000000034px;font-size:8.2px;color:#1f262d;font-weight:700;white-space:nowrap;">有用性</div><div style="position:absolute;left:-185px;width:400px;text-align:right;top:22.19999999999999px;height:18.400000000000034px;line-height:18.400000000000034px;font-size:8.2px;color:#1f262d;font-weight:700;white-space:nowrap;">コンテキス...</div><div style="position:absolute;left:-119.5px;width:400px;text-align:right;top:22.19999999999999px;height:18.400000000000034px;line-height:18.400000000000034px;font-size:8.2px;color:#1f262d;font-weight:700;white-space:nowrap;">判定</div><div style="position:absolute;left:4.600000000000023px;top:39.60000000000002px;height:22.3px;line-height:22.3px;font-size:9.6px;color:#2d333a;font-weight:400;white-space:nowrap;letter-spacing:-0.33px;">27293</div><div style="position:absolute;left:-307.90000000000003px;width:400px;text-align:right;top:39.60000000000002px;height:22.3px;line-height:22.3px;font-size:9.6px;color:#2d333a;font-weight:400;white-space:nowrap;letter-spacing:-0.33px;">1</div><div style="position:absolute;left:-274.2px;width:400px;text-align:right;top:39.60000000000002px;height:22.3px;line-height:22.3px;font-size:9.6px;color:#2d333a;font-weight:400;white-space:nowrap;letter-spacing:-0.33px;">1</div><div style="position:absolute;left:-240.40000000000003px;width:400px;text-align:right;top:39.60000000000002px;height:22.3px;line-height:22.3px;font-size:9.6px;color:#2d333a;font-weight:400;white-space:nowrap;letter-spacing:-0.33px;">1</div><div style="position:absolute;left:-178.7px;width:400px;text-align:right;top:39.60000000000002px;height:22.3px;line-height:22.3px;font-size:9.6px;color:#2d333a;font-weight:400;white-space:nowrap;letter-spacing:-0.33px;">1.00</div><div style="position:absolute;left:224px;top:40px;width:61px;height:22px;box-sizing:border-box;background:#1bb85c;border-left:1px solid #12b054;border-right:1px solid #12b054;border-top:1px solid #12b054;"></div><div style="position:absolute;left:-119.30000000000001px;width:400px;text-align:right;top:44.40000000000002px;height:12px;line-height:12px;font-size:9.8px;color:#fff;font-weight:400;white-space:nowrap;letter-spacing:-0.22px;-webkit-text-stroke:0.1px #fff;">1</div><div style="position:absolute;left:241.10000000000002px;top:55.60000000000002px;width:40.5px;height:4.2px;background:rgba(255,255,255,0.78);"></div><div style="position:absolute;left:4.600000000000023px;top:61.90000000000002px;height:22.3px;line-height:22.3px;font-size:9.6px;color:#2d333a;font-weight:400;white-space:nowrap;letter-spacing:-0.33px;">31615</div><div style="position:absolute;left:-307.90000000000003px;width:400px;text-align:right;top:61.90000000000002px;height:22.3px;line-height:22.3px;font-size:9.6px;color:#2d333a;font-weight:400;white-space:nowrap;letter-spacing:-0.33px;">1</div><div style="position:absolute;left:-274.2px;width:400px;text-align:right;top:61.90000000000002px;height:22.3px;line-height:22.3px;font-size:9.6px;color:#2d333a;font-weight:400;white-space:nowrap;letter-spacing:-0.33px;">1</div><div style="position:absolute;left:-240.40000000000003px;width:400px;text-align:right;top:61.90000000000002px;height:22.3px;line-height:22.3px;font-size:9.6px;color:#2d333a;font-weight:400;white-space:nowrap;letter-spacing:-0.33px;">1</div><div style="position:absolute;left:-178.7px;width:400px;text-align:right;top:61.90000000000002px;height:22.3px;line-height:22.3px;font-size:9.6px;color:#2d333a;font-weight:400;white-space:nowrap;letter-spacing:-0.33px;">1.00</div><div style="position:absolute;left:224px;top:62px;width:61px;height:23px;box-sizing:border-box;background:#1bb85c;border-left:1px solid #12b054;border-right:1px solid #12b054;"></div><div style="position:absolute;left:-119.30000000000001px;width:400px;text-align:right;top:66.70000000000002px;height:12px;line-height:12px;font-size:9.8px;color:#fff;font-weight:400;white-space:nowrap;letter-spacing:-0.22px;-webkit-text-stroke:0.1px #fff;">1</div><div style="position:absolute;left:241.10000000000002px;top:77.90000000000002px;width:40.5px;height:4.2px;background:rgba(255,255,255,0.78);"></div><div style="position:absolute;left:4.600000000000023px;top:84.20000000000002px;height:22.3px;line-height:22.3px;font-size:9.6px;color:#2d333a;font-weight:400;white-space:nowrap;letter-spacing:-0.33px;">32134</div><div style="position:absolute;left:-307.90000000000003px;width:400px;text-align:right;top:84.20000000000002px;height:22.3px;line-height:22.3px;font-size:9.6px;color:#2d333a;font-weight:400;white-space:nowrap;letter-spacing:-0.33px;">0</div><div style="position:absolute;left:-274.2px;width:400px;text-align:right;top:84.20000000000002px;height:22.3px;line-height:22.3px;font-size:9.6px;color:#2d333a;font-weight:400;white-space:nowrap;letter-spacing:-0.33px;">0</div><div style="position:absolute;left:-240.40000000000003px;width:400px;text-align:right;top:84.20000000000002px;height:22.3px;line-height:22.3px;font-size:9.6px;color:#2d333a;font-weight:400;white-space:nowrap;letter-spacing:-0.33px;">1</div><div style="position:absolute;left:-178.7px;width:400px;text-align:right;top:84.20000000000002px;height:22.3px;line-height:22.3px;font-size:9.6px;color:#2d333a;font-weight:400;white-space:nowrap;letter-spacing:-0.33px;">0.75</div><div style="position:absolute;left:224px;top:85px;width:61px;height:22px;box-sizing:border-box;background:#1bb85c;border-left:1px solid #12b054;border-right:1px solid #12b054;"></div><div style="position:absolute;left:-119.30000000000001px;width:400px;text-align:right;top:89.00000000000001px;height:12px;line-height:12px;font-size:9.8px;color:#fff;font-weight:400;white-space:nowrap;letter-spacing:-0.22px;-webkit-text-stroke:0.1px #fff;">1</div><div style="position:absolute;left:241.10000000000002px;top:100.20000000000002px;width:40.5px;height:4.2px;background:rgba(255,255,255,0.78);"></div><div style="position:absolute;left:4.600000000000023px;top:106.50000000000003px;height:22.3px;line-height:22.3px;font-size:9.6px;color:#2d333a;font-weight:400;white-space:nowrap;letter-spacing:-0.33px;">32247</div><div style="position:absolute;left:-307.90000000000003px;width:400px;text-align:right;top:106.50000000000003px;height:22.3px;line-height:22.3px;font-size:9.6px;color:#2d333a;font-weight:400;white-space:nowrap;letter-spacing:-0.33px;">0</div><div style="position:absolute;left:-274.2px;width:400px;text-align:right;top:106.50000000000003px;height:22.3px;line-height:22.3px;font-size:9.6px;color:#2d333a;font-weight:400;white-space:nowrap;letter-spacing:-0.33px;">0</div><div style="position:absolute;left:-240.40000000000003px;width:400px;text-align:right;top:106.50000000000003px;height:22.3px;line-height:22.3px;font-size:9.6px;color:#2d333a;font-weight:400;white-space:nowrap;letter-spacing:-0.33px;">1</div><div style="position:absolute;left:-178.7px;width:400px;text-align:right;top:106.50000000000003px;height:22.3px;line-height:22.3px;font-size:9.6px;color:#2d333a;font-weight:400;white-space:nowrap;letter-spacing:-0.33px;">0.50</div><div style="position:absolute;left:224px;top:107px;width:61px;height:22px;box-sizing:border-box;background:#1bb85c;border-left:1px solid #12b054;border-right:1px solid #12b054;"></div><div style="position:absolute;left:-119.30000000000001px;width:400px;text-align:right;top:111.30000000000003px;height:12px;line-height:12px;font-size:9.8px;color:#fff;font-weight:400;white-space:nowrap;letter-spacing:-0.22px;-webkit-text-stroke:0.1px #fff;">1</div><div style="position:absolute;left:241.10000000000002px;top:122.50000000000003px;width:40.5px;height:4.2px;background:rgba(255,255,255,0.78);"></div><div style="position:absolute;left:4.600000000000023px;top:128.8px;height:22.3px;line-height:22.3px;font-size:9.6px;color:#2d333a;font-weight:400;white-space:nowrap;letter-spacing:-0.33px;">32252</div><div style="position:absolute;left:-307.90000000000003px;width:400px;text-align:right;top:128.8px;height:22.3px;line-height:22.3px;font-size:9.6px;color:#2d333a;font-weight:400;white-space:nowrap;letter-spacing:-0.33px;">1</div><div style="position:absolute;left:-274.2px;width:400px;text-align:right;top:128.8px;height:22.3px;line-height:22.3px;font-size:9.6px;color:#2d333a;font-weight:400;white-space:nowrap;letter-spacing:-0.33px;">1</div><div style="position:absolute;left:-240.40000000000003px;width:400px;text-align:right;top:128.8px;height:22.3px;line-height:22.3px;font-size:9.6px;color:#2d333a;font-weight:400;white-space:nowrap;letter-spacing:-0.33px;">1</div><div style="position:absolute;left:-178.7px;width:400px;text-align:right;top:128.8px;height:22.3px;line-height:22.3px;font-size:9.6px;color:#2d333a;font-weight:400;white-space:nowrap;letter-spacing:-0.33px;">0.75</div><div style="position:absolute;left:224px;top:129px;width:61px;height:23px;box-sizing:border-box;background:#1bb85c;border-left:1px solid #12b054;border-right:1px solid #12b054;"></div><div style="position:absolute;left:-119.30000000000001px;width:400px;text-align:right;top:133.60000000000002px;height:12px;line-height:12px;font-size:9.8px;color:#fff;font-weight:400;white-space:nowrap;letter-spacing:-0.22px;-webkit-text-stroke:0.1px #fff;">1</div><div style="position:absolute;left:241.10000000000002px;top:144.8px;width:40.5px;height:4.2px;background:rgba(255,255,255,0.78);"></div><div style="position:absolute;left:4.600000000000023px;top:151.10000000000002px;height:22.3px;line-height:22.3px;font-size:9.6px;color:#2d333a;font-weight:400;white-space:nowrap;letter-spacing:-0.33px;">32254</div><div style="position:absolute;left:-307.90000000000003px;width:400px;text-align:right;top:151.10000000000002px;height:22.3px;line-height:22.3px;font-size:9.6px;color:#2d333a;font-weight:400;white-space:nowrap;letter-spacing:-0.33px;">0</div><div style="position:absolute;left:-274.2px;width:400px;text-align:right;top:151.10000000000002px;height:22.3px;line-height:22.3px;font-size:9.6px;color:#2d333a;font-weight:400;white-space:nowrap;letter-spacing:-0.33px;">1</div><div style="position:absolute;left:-240.40000000000003px;width:400px;text-align:right;top:151.10000000000002px;height:22.3px;line-height:22.3px;font-size:9.6px;color:#2d333a;font-weight:400;white-space:nowrap;letter-spacing:-0.33px;">1</div><div style="position:absolute;left:-178.7px;width:400px;text-align:right;top:151.10000000000002px;height:22.3px;line-height:22.3px;font-size:9.6px;color:#2d333a;font-weight:400;white-space:nowrap;letter-spacing:-0.33px;">0.25</div><div style="position:absolute;left:224px;top:152px;width:61px;height:22px;box-sizing:border-box;background:#1bb85c;border-left:1px solid #12b054;border-right:1px solid #12b054;"></div><div style="position:absolute;left:-119.30000000000001px;width:400px;text-align:right;top:155.90000000000003px;height:12px;line-height:12px;font-size:9.8px;color:#fff;font-weight:400;white-space:nowrap;letter-spacing:-0.22px;-webkit-text-stroke:0.1px #fff;">1</div><div style="position:absolute;left:241.10000000000002px;top:167.10000000000002px;width:40.5px;height:4.2px;background:rgba(255,255,255,0.78);"></div><div style="position:absolute;left:4.600000000000023px;top:173.40000000000003px;height:22.3px;line-height:22.3px;font-size:9.6px;color:#2d333a;font-weight:400;white-space:nowrap;letter-spacing:-0.33px;">32255</div><div style="position:absolute;left:-307.90000000000003px;width:400px;text-align:right;top:173.40000000000003px;height:22.3px;line-height:22.3px;font-size:9.6px;color:#2d333a;font-weight:400;white-space:nowrap;letter-spacing:-0.33px;">1</div><div style="position:absolute;left:-274.2px;width:400px;text-align:right;top:173.40000000000003px;height:22.3px;line-height:22.3px;font-size:9.6px;color:#2d333a;font-weight:400;white-space:nowrap;letter-spacing:-0.33px;">0</div><div style="position:absolute;left:-240.40000000000003px;width:400px;text-align:right;top:173.40000000000003px;height:22.3px;line-height:22.3px;font-size:9.6px;color:#2d333a;font-weight:400;white-space:nowrap;letter-spacing:-0.33px;">1</div><div style="position:absolute;left:-178.7px;width:400px;text-align:right;top:173.40000000000003px;height:22.3px;line-height:22.3px;font-size:9.6px;color:#2d333a;font-weight:400;white-space:nowrap;letter-spacing:-0.33px;">1.00</div><div style="position:absolute;left:224px;top:174px;width:61px;height:22px;box-sizing:border-box;background:#1bb85c;border-left:1px solid #12b054;border-right:1px solid #12b054;"></div><div style="position:absolute;left:-119.30000000000001px;width:400px;text-align:right;top:178.20000000000005px;height:12px;line-height:12px;font-size:9.8px;color:#fff;font-weight:400;white-space:nowrap;letter-spacing:-0.22px;-webkit-text-stroke:0.1px #fff;">1</div><div style="position:absolute;left:241.10000000000002px;top:189.40000000000003px;width:40.5px;height:4.2px;background:rgba(255,255,255,0.78);"></div><div style="position:absolute;left:0px;top:61.90000000000002px;width:285px;height:1px;background:rgba(30,40,90,0.09);"></div><div style="position:absolute;left:0px;top:84.20000000000002px;width:285px;height:1px;background:rgba(30,40,90,0.09);"></div><div style="position:absolute;left:0px;top:106.50000000000001px;width:285px;height:1px;background:rgba(30,40,90,0.09);"></div><div style="position:absolute;left:0px;top:128.80000000000004px;width:285px;height:1px;background:rgba(30,40,90,0.09);"></div><div style="position:absolute;left:0px;top:151.10000000000002px;width:285px;height:1px;background:rgba(30,40,90,0.09);"></div><div style="position:absolute;left:0px;top:173.40000000000003px;width:285px;height:1px;background:rgba(30,40,90,0.09);"></div><div style="position:absolute;left:0px;top:195.70000000000005px;width:285px;height:1px;background:rgba(30,40,90,0.09);"></div><div style="position:absolute;left:131px;top:192.5px;width:29px;height:1.5px;background:#cfd3de;border-radius:1px;"></div><div style="position:absolute;left:0px;top:0px;width:285px;height:195px;box-sizing:border-box;border:1px solid #e1e3ec;"></div></div>
</body></html>
